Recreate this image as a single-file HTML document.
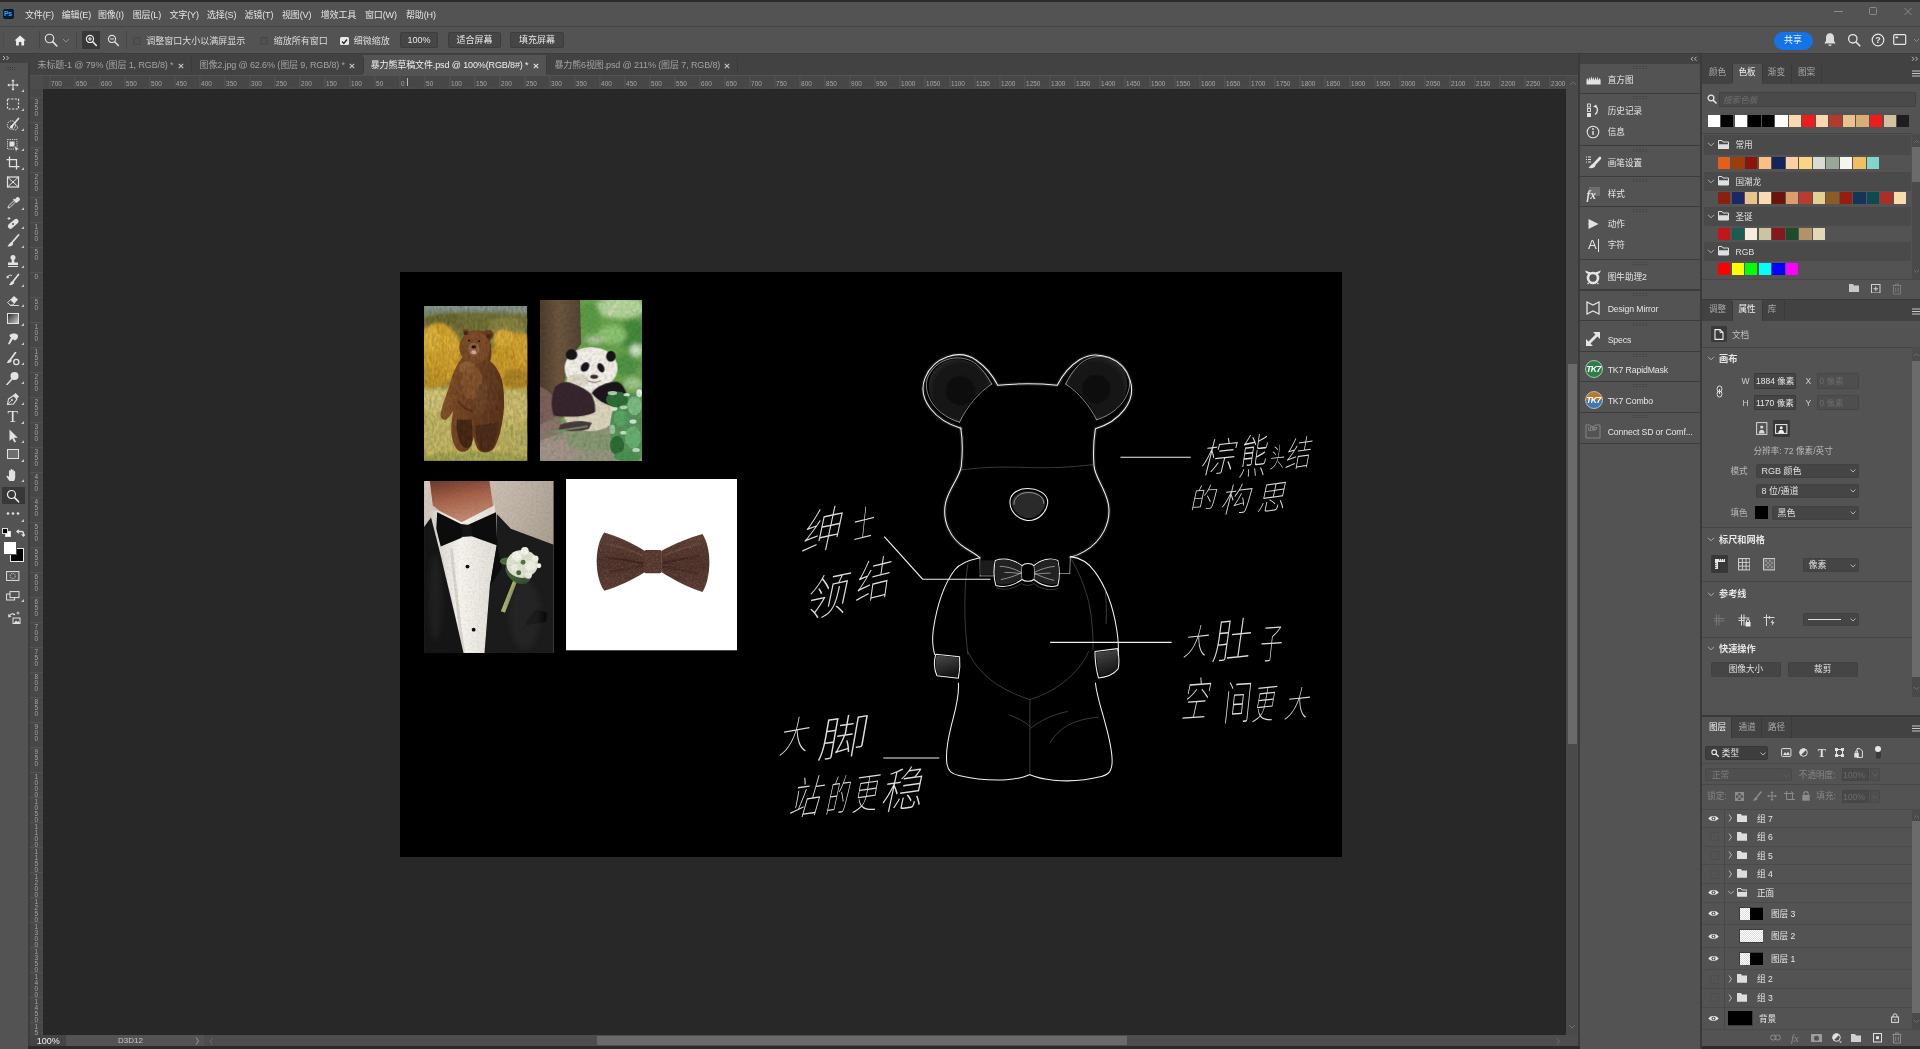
<!DOCTYPE html>
<html lang="zh-CN"><head><meta charset="utf-8"><title>Photoshop</title>
<style>
html,body{margin:0;padding:0;background:#535353;}
body{width:1920px;height:1049px;overflow:hidden;position:relative;font-family:"Liberation Sans","Noto Sans CJK SC",sans-serif;font-size:11px;color:#d6d6d6;}
div,span,svg{position:absolute;box-sizing:border-box;}
span{white-space:nowrap;}
</style></head>
<body>
<div id="app" style="left:0;top:0;width:1920px;height:1049px;overflow:hidden;will-change:transform;">
<div style="left:0px;top:0px;width:1920px;height:1049px;background:#535353;"></div>
<div style="left:0px;top:0px;width:1920px;height:2px;background:#2b2b2b;"></div>
<div style="left:0px;top:26px;width:1920px;height:1px;background:#454545;"></div>
<div style="left:3px;top:9px;width:11px;height:10px;background:#001e36;border-radius:2px;"></div>
<span style="left:4px;top:9px;height:10px;line-height:10px;font-size:7px;font-weight:bold;color:#31a8ff;letter-spacing:-0.3px;">Ps</span>
<span style="left:25px;top:6.5px;height:16px;line-height:16px;color:#e4e4e4;font-size:9px;letter-spacing:-0.150px;">文件(F)</span>
<span style="left:61.75px;top:6.5px;height:16px;line-height:16px;color:#e4e4e4;font-size:9px;letter-spacing:-0.150px;">编辑(E)</span>
<span style="left:98px;top:6.5px;height:16px;line-height:16px;color:#e4e4e4;font-size:9px;letter-spacing:-0.150px;">图像(I)</span>
<span style="left:132.75px;top:6.5px;height:16px;line-height:16px;color:#e4e4e4;font-size:9px;letter-spacing:-0.150px;">图层(L)</span>
<span style="left:169.5px;top:6.5px;height:16px;line-height:16px;color:#e4e4e4;font-size:9px;letter-spacing:-0.150px;">文字(Y)</span>
<span style="left:207px;top:6.5px;height:16px;line-height:16px;color:#e4e4e4;font-size:9px;letter-spacing:-0.150px;">选择(S)</span>
<span style="left:244.5px;top:6.5px;height:16px;line-height:16px;color:#e4e4e4;font-size:9px;letter-spacing:-0.150px;">滤镜(T)</span>
<span style="left:282px;top:6.5px;height:16px;line-height:16px;color:#e4e4e4;font-size:9px;letter-spacing:-0.150px;">视图(V)</span>
<span style="left:320.75px;top:6.5px;height:16px;line-height:16px;color:#e4e4e4;font-size:9px;letter-spacing:-0.150px;">增效工具</span>
<span style="left:365px;top:6.5px;height:16px;line-height:16px;color:#e4e4e4;font-size:9px;letter-spacing:-0.150px;">窗口(W)</span>
<span style="left:406px;top:6.5px;height:16px;line-height:16px;color:#e4e4e4;font-size:9px;letter-spacing:-0.150px;">帮助(H)</span>
<svg style="left:1832px;top:5px;" width="84" height="14" viewBox="0 0 84 14"><path d="M2 6.5h9" stroke="#8a8a8a" stroke-width="1" fill="none"/><rect x="37.5" y="2.5" width="7" height="7" rx="1" stroke="#8a8a8a" fill="none"/><path d="M72.5 3l7 7M79.5 3l-7 7" stroke="#8a8a8a" stroke-width="1" fill="none"/></svg>
<div style="left:0px;top:53px;width:1920px;height:1px;background:#3c3c3c;"></div>
<div style="left:3px;top:32px;width:1px;height:16px;background:repeating-linear-gradient(#464646 0 1px,transparent 1px 2px);"></div>
<svg style="left:13.9px;top:34.8px;" width="12.2" height="10.9" viewBox="0 0 14 13"><path d="M7 0.500L0.300 6.600h1.900v5.900h3.300V8.400h3v4.100h3.300V6.600h1.900z" fill="#ececec"/></svg>
<div style="left:38.5px;top:31px;width:1px;height:18px;background:#464646;"></div>
<svg style="left:43.7px;top:33px;" width="14.7" height="14.7" viewBox="0 0 16 16"><circle cx="6" cy="6" r="4.600" stroke="#e2e2e2" stroke-width="1.250" fill="none"/><path d="M9.400 9.400l4.600 4.800" stroke="#e2e2e2" stroke-width="1.700" stroke-linecap="round"/></svg>
<svg style="left:62px;top:38px;" width="8" height="5" viewBox="0 0 8 5"><path d="M1 1l3 3 3-3" stroke="#8d8d8d" stroke-width="1" fill="none"/></svg>
<div style="left:75.5px;top:31px;width:1px;height:18px;background:#464646;"></div>
<div style="left:82px;top:31px;width:18px;height:18px;background:#383838;"></div>
<svg style="left:84.8px;top:34.3px;" width="12.6" height="12.6" viewBox="0 0 14 14"><circle cx="5.500" cy="5.500" r="4" stroke="#ececec" stroke-width="1.250" fill="none"/><path d="M8.600 8.600l4 4.200" stroke="#ececec" stroke-width="1.700" stroke-linecap="round"/><path d="M3.300 5.500h4.400M5.500 3.300v4.400" stroke="#ececec" stroke-width="1.100"/></svg>
<svg style="left:107px;top:34.3px;" width="12.6" height="12.6" viewBox="0 0 14 14"><circle cx="5.500" cy="5.500" r="4" stroke="#dcdcdc" stroke-width="1.250" fill="none"/><path d="M8.600 8.600l4 4.200" stroke="#dcdcdc" stroke-width="1.700" stroke-linecap="round"/><path d="M3.300 5.500h4.400" stroke="#dcdcdc" stroke-width="1.100"/></svg>
<div style="left:125.5px;top:31px;width:1px;height:18px;background:#464646;"></div>
<div style="left:132.5px;top:36.5px;width:8px;height:8px;border:1px solid #464646;background:#505050;border-radius:1.5px;"></div>
<span style="left:146.2px;top:32.8px;height:16px;line-height:16px;color:#dcdcdc;font-size:9px;">调整窗口大小以满屏显示</span>
<div style="left:260px;top:36.5px;width:8px;height:8px;border:1px solid #464646;background:#505050;border-radius:1.5px;"></div>
<span style="left:273.7px;top:32.8px;height:16px;line-height:16px;color:#dcdcdc;font-size:9px;">缩放所有窗口</span>
<div style="left:340px;top:36.5px;width:8.5px;height:8.5px;background:#e8e8e8;border-radius:1.5px;"></div>
<svg style="left:340px;top:36.5px;" width="9" height="9" viewBox="0 0 9 9"><path d="M2 4.6l1.8 1.9 3.2-4" stroke="#2a2a2a" stroke-width="1.4" fill="none"/></svg>
<span style="left:353.7px;top:32.8px;height:16px;line-height:16px;color:#dcdcdc;font-size:9px;">细微缩放</span>
<div style="left:400px;top:32px;width:38px;height:16px;background:#464646;border:1px solid #3d3d3d;border-radius:2px;"></div>
<span style="left:400px;top:32px;width:38px;height:16px;line-height:17px;text-align:center;font-size:9px;color:#e6e6e6;">100%</span>
<div style="left:447.7px;top:32px;width:53.5px;height:16px;background:#464646;border:1px solid #3d3d3d;border-radius:2px;"></div>
<span style="left:447.7px;top:32px;width:53.5px;height:16px;line-height:17px;text-align:center;font-size:9px;color:#e6e6e6;">适合屏幕</span>
<div style="left:510px;top:32px;width:54px;height:16px;background:#464646;border:1px solid #3d3d3d;border-radius:2px;"></div>
<span style="left:510px;top:32px;width:54px;height:16px;line-height:17px;text-align:center;font-size:9px;color:#e6e6e6;">填充屏幕</span>
<div style="left:1773.5px;top:32px;width:39px;height:17.5px;background:#1473e6;border-radius:9px;"></div>
<span style="left:1773.5px;top:32px;width:39px;height:17.5px;line-height:17px;text-align:center;font-size:9px;color:#fff;">共享</span>
<svg style="left:1823px;top:32px;" width="14" height="16" viewBox="0 0 14 16"><path d="M7 1.2c-2.6 0-4 2-4 4.4v3.2L1.4 11.4h11.2L11 8.8V5.6C11 3.2 9.600 1.2 7 1.200z" fill="#dcdcdc"/><path d="M5.400 12.400a1.600 1.600 0 0 0 3.200 0z" fill="#dcdcdc"/></svg>
<svg style="left:1847px;top:33px;" width="14" height="14" viewBox="0 0 14 14"><circle cx="5.800" cy="5.800" r="4.200" stroke="#e6e6e6" stroke-width="1.300" fill="none"/><path d="M9 9l3.800 3.800" stroke="#e6e6e6" stroke-width="1.600" stroke-linecap="round"/></svg>
<svg style="left:1871px;top:33px;" width="14" height="14" viewBox="0 0 14 14"><circle cx="7" cy="7" r="5.800" stroke="#e6e6e6" stroke-width="1.200" fill="none"/></svg>
<span style="left:1871px;top:33px;width:14px;height:14px;line-height:14px;text-align:center;font-size:9px;font-weight:bold;color:#e6e6e6;">?</span>
<svg style="left:1893px;top:34px;" width="14" height="12" viewBox="0 0 14 12"><rect x="0.700" y="0.700" width="12" height="9.600" rx="1" stroke="#e6e6e6" stroke-width="1.200" fill="none"/><rect x="2.500" y="2.600" width="2.600" height="1.600" fill="#e6e6e6"/></svg>
<svg style="left:1913px;top:38px;" width="7" height="5" viewBox="0 0 7 5"><path d="M1 1l2.500 2.500L6 1" stroke="#8d8d8d" stroke-width="1" fill="none"/></svg>
<div style="left:0px;top:54px;width:1920px;height:21px;background:#424242;"></div>
<div style="left:0px;top:54px;width:29px;height:9px;background:#424242;"></div>
<svg style="left:2px;top:55px;" width="8" height="6" viewBox="0 0 8 6"><path d="M1 1l2 2-2 2M4.500 1l2 2-2 2" stroke="#c8c8c8" stroke-width="0.900" fill="none"/></svg>
<div style="left:363px;top:55px;width:183px;height:20px;background:#535353;"></div>
<span style="left:37.5px;top:57.0px;height:16px;line-height:16px;color:#a2a2a2;font-size:9px;letter-spacing:-0.120px;">未标题-1 @ 79% (图层 1, RGB/8) *</span>
<svg style="left:178.2px;top:62.5px;" width="6" height="6" viewBox="0 0 6 6"><path d="M0.800 0.800l4.400 4.400M5.200 0.800l-4.400 4.400" stroke="#c0c0c0" stroke-width="1.200"/></svg>
<span style="left:199.5px;top:57.0px;height:16px;line-height:16px;color:#a2a2a2;font-size:9px;letter-spacing:-0.120px;">图像2.jpg @ 62.6% (图层 9, RGB/8) *</span>
<svg style="left:349px;top:62.5px;" width="6" height="6" viewBox="0 0 6 6"><path d="M0.800 0.800l4.400 4.400M5.200 0.800l-4.400 4.400" stroke="#c0c0c0" stroke-width="1.200"/></svg>
<span style="left:370.7px;top:57.0px;height:16px;line-height:16px;color:#f0f0f0;font-size:9px;letter-spacing:-0.120px;">暴力熊草稿文件.psd @ 100%(RGB/8#) *</span>
<svg style="left:532.7px;top:62.5px;" width="6" height="6" viewBox="0 0 6 6"><path d="M0.800 0.800l4.400 4.400M5.200 0.800l-4.400 4.400" stroke="#e0e0e0" stroke-width="1.200"/></svg>
<span style="left:554.4px;top:57.0px;height:16px;line-height:16px;color:#a2a2a2;font-size:9px;letter-spacing:-0.120px;">暴力熊6视图.psd @ 211% (图层 7, RGB/8)</span>
<svg style="left:724px;top:62.5px;" width="6" height="6" viewBox="0 0 6 6"><path d="M0.800 0.800l4.400 4.400M5.200 0.800l-4.400 4.400" stroke="#c0c0c0" stroke-width="1.200"/></svg>
<div style="left:191px;top:57px;width:1px;height:16px;background:#3b3b3b;"></div>
<div style="left:362.5px;top:57px;width:1px;height:16px;background:#3b3b3b;"></div>
<div style="left:546px;top:57px;width:1px;height:16px;background:#3b3b3b;"></div>
<div style="left:737px;top:57px;width:1px;height:16px;background:#3b3b3b;"></div>
<div style="left:28px;top:63px;width:2px;height:986px;background:#3d3d3d;"></div>
<div style="left:30px;top:76px;width:1536px;height:959px;background:#282828;"></div>
<div style="left:30px;top:76px;width:1536px;height:12.5px;background:#474747;"></div>
<div style="left:30px;top:76px;width:12.5px;height:12.5px;background:#4c4c4c;"></div>
<svg style="left:30px;top:76px;font-family:'Liberation Sans',sans-serif;" width="1536" height="12.5" viewBox="0 0 1536 12.5"><rect x="19.4" y="0" width="1" height="12.500" fill="#565656"/><text transform="translate(21.1 9.500) scale(0.880 1)" font-size="7.300" fill="#a6a6a6">700</text><rect x="44.4" y="0" width="1" height="12.500" fill="#565656"/><text transform="translate(46.1 9.500) scale(0.880 1)" font-size="7.300" fill="#a6a6a6">650</text><rect x="69.4" y="0" width="1" height="12.500" fill="#565656"/><text transform="translate(71.1 9.500) scale(0.880 1)" font-size="7.300" fill="#a6a6a6">600</text><rect x="94.4" y="0" width="1" height="12.500" fill="#565656"/><text transform="translate(96.1 9.500) scale(0.880 1)" font-size="7.300" fill="#a6a6a6">550</text><rect x="119.4" y="0" width="1" height="12.500" fill="#565656"/><text transform="translate(121.1 9.500) scale(0.880 1)" font-size="7.300" fill="#a6a6a6">500</text><rect x="144.4" y="0" width="1" height="12.500" fill="#565656"/><text transform="translate(146.1 9.500) scale(0.880 1)" font-size="7.300" fill="#a6a6a6">450</text><rect x="169.4" y="0" width="1" height="12.500" fill="#565656"/><text transform="translate(171.1 9.500) scale(0.880 1)" font-size="7.300" fill="#a6a6a6">400</text><rect x="194.4" y="0" width="1" height="12.500" fill="#565656"/><text transform="translate(196.1 9.500) scale(0.880 1)" font-size="7.300" fill="#a6a6a6">350</text><rect x="219.4" y="0" width="1" height="12.500" fill="#565656"/><text transform="translate(221.1 9.500) scale(0.880 1)" font-size="7.300" fill="#a6a6a6">300</text><rect x="244.4" y="0" width="1" height="12.500" fill="#565656"/><text transform="translate(246.1 9.500) scale(0.880 1)" font-size="7.300" fill="#a6a6a6">250</text><rect x="269.4" y="0" width="1" height="12.500" fill="#565656"/><text transform="translate(271.1 9.500) scale(0.880 1)" font-size="7.300" fill="#a6a6a6">200</text><rect x="294.4" y="0" width="1" height="12.500" fill="#565656"/><text transform="translate(296.1 9.500) scale(0.880 1)" font-size="7.300" fill="#a6a6a6">150</text><rect x="319.4" y="0" width="1" height="12.500" fill="#565656"/><text transform="translate(321.1 9.500) scale(0.880 1)" font-size="7.300" fill="#a6a6a6">100</text><rect x="344.4" y="0" width="1" height="12.500" fill="#565656"/><text transform="translate(346.1 9.500) scale(0.880 1)" font-size="7.300" fill="#a6a6a6">50</text><rect x="369.4" y="0" width="1" height="12.500" fill="#565656"/><text transform="translate(371.1 9.500) scale(0.880 1)" font-size="7.300" fill="#a6a6a6">0</text><rect x="394.4" y="0" width="1" height="12.500" fill="#565656"/><text transform="translate(396.1 9.500) scale(0.880 1)" font-size="7.300" fill="#a6a6a6">50</text><rect x="419.4" y="0" width="1" height="12.500" fill="#565656"/><text transform="translate(421.1 9.500) scale(0.880 1)" font-size="7.300" fill="#a6a6a6">100</text><rect x="444.4" y="0" width="1" height="12.500" fill="#565656"/><text transform="translate(446.1 9.500) scale(0.880 1)" font-size="7.300" fill="#a6a6a6">150</text><rect x="469.4" y="0" width="1" height="12.500" fill="#565656"/><text transform="translate(471.1 9.500) scale(0.880 1)" font-size="7.300" fill="#a6a6a6">200</text><rect x="494.4" y="0" width="1" height="12.500" fill="#565656"/><text transform="translate(496.1 9.500) scale(0.880 1)" font-size="7.300" fill="#a6a6a6">250</text><rect x="519.4" y="0" width="1" height="12.500" fill="#565656"/><text transform="translate(521.1 9.500) scale(0.880 1)" font-size="7.300" fill="#a6a6a6">300</text><rect x="544.4" y="0" width="1" height="12.500" fill="#565656"/><text transform="translate(546.1 9.500) scale(0.880 1)" font-size="7.300" fill="#a6a6a6">350</text><rect x="569.4" y="0" width="1" height="12.500" fill="#565656"/><text transform="translate(571.1 9.500) scale(0.880 1)" font-size="7.300" fill="#a6a6a6">400</text><rect x="594.4" y="0" width="1" height="12.500" fill="#565656"/><text transform="translate(596.1 9.500) scale(0.880 1)" font-size="7.300" fill="#a6a6a6">450</text><rect x="619.4" y="0" width="1" height="12.500" fill="#565656"/><text transform="translate(621.1 9.500) scale(0.880 1)" font-size="7.300" fill="#a6a6a6">500</text><rect x="644.4" y="0" width="1" height="12.500" fill="#565656"/><text transform="translate(646.1 9.500) scale(0.880 1)" font-size="7.300" fill="#a6a6a6">550</text><rect x="669.4" y="0" width="1" height="12.500" fill="#565656"/><text transform="translate(671.1 9.500) scale(0.880 1)" font-size="7.300" fill="#a6a6a6">600</text><rect x="694.4" y="0" width="1" height="12.500" fill="#565656"/><text transform="translate(696.1 9.500) scale(0.880 1)" font-size="7.300" fill="#a6a6a6">650</text><rect x="719.4" y="0" width="1" height="12.500" fill="#565656"/><text transform="translate(721.1 9.500) scale(0.880 1)" font-size="7.300" fill="#a6a6a6">700</text><rect x="744.4" y="0" width="1" height="12.500" fill="#565656"/><text transform="translate(746.1 9.500) scale(0.880 1)" font-size="7.300" fill="#a6a6a6">750</text><rect x="769.4" y="0" width="1" height="12.500" fill="#565656"/><text transform="translate(771.1 9.500) scale(0.880 1)" font-size="7.300" fill="#a6a6a6">800</text><rect x="794.4" y="0" width="1" height="12.500" fill="#565656"/><text transform="translate(796.1 9.500) scale(0.880 1)" font-size="7.300" fill="#a6a6a6">850</text><rect x="819.4" y="0" width="1" height="12.500" fill="#565656"/><text transform="translate(821.1 9.500) scale(0.880 1)" font-size="7.300" fill="#a6a6a6">900</text><rect x="844.4" y="0" width="1" height="12.500" fill="#565656"/><text transform="translate(846.1 9.500) scale(0.880 1)" font-size="7.300" fill="#a6a6a6">950</text><rect x="869.4" y="0" width="1" height="12.500" fill="#565656"/><text transform="translate(871.1 9.500) scale(0.880 1)" font-size="7.300" fill="#a6a6a6">1000</text><rect x="894.4" y="0" width="1" height="12.500" fill="#565656"/><text transform="translate(896.1 9.500) scale(0.880 1)" font-size="7.300" fill="#a6a6a6">1050</text><rect x="919.4" y="0" width="1" height="12.500" fill="#565656"/><text transform="translate(921.1 9.500) scale(0.880 1)" font-size="7.300" fill="#a6a6a6">1100</text><rect x="944.4" y="0" width="1" height="12.500" fill="#565656"/><text transform="translate(946.1 9.500) scale(0.880 1)" font-size="7.300" fill="#a6a6a6">1150</text><rect x="969.4" y="0" width="1" height="12.500" fill="#565656"/><text transform="translate(971.1 9.500) scale(0.880 1)" font-size="7.300" fill="#a6a6a6">1200</text><rect x="994.4" y="0" width="1" height="12.500" fill="#565656"/><text transform="translate(996.1 9.500) scale(0.880 1)" font-size="7.300" fill="#a6a6a6">1250</text><rect x="1019.4" y="0" width="1" height="12.500" fill="#565656"/><text transform="translate(1021.1 9.500) scale(0.880 1)" font-size="7.300" fill="#a6a6a6">1300</text><rect x="1044.4" y="0" width="1" height="12.500" fill="#565656"/><text transform="translate(1046.1 9.500) scale(0.880 1)" font-size="7.300" fill="#a6a6a6">1350</text><rect x="1069.4" y="0" width="1" height="12.500" fill="#565656"/><text transform="translate(1071.1 9.500) scale(0.880 1)" font-size="7.300" fill="#a6a6a6">1400</text><rect x="1094.4" y="0" width="1" height="12.500" fill="#565656"/><text transform="translate(1096.1 9.500) scale(0.880 1)" font-size="7.300" fill="#a6a6a6">1450</text><rect x="1119.4" y="0" width="1" height="12.500" fill="#565656"/><text transform="translate(1121.1 9.500) scale(0.880 1)" font-size="7.300" fill="#a6a6a6">1500</text><rect x="1144.4" y="0" width="1" height="12.500" fill="#565656"/><text transform="translate(1146.1 9.500) scale(0.880 1)" font-size="7.300" fill="#a6a6a6">1550</text><rect x="1169.4" y="0" width="1" height="12.500" fill="#565656"/><text transform="translate(1171.1 9.500) scale(0.880 1)" font-size="7.300" fill="#a6a6a6">1600</text><rect x="1194.4" y="0" width="1" height="12.500" fill="#565656"/><text transform="translate(1196.1 9.500) scale(0.880 1)" font-size="7.300" fill="#a6a6a6">1650</text><rect x="1219.4" y="0" width="1" height="12.500" fill="#565656"/><text transform="translate(1221.1 9.500) scale(0.880 1)" font-size="7.300" fill="#a6a6a6">1700</text><rect x="1244.4" y="0" width="1" height="12.500" fill="#565656"/><text transform="translate(1246.1 9.500) scale(0.880 1)" font-size="7.300" fill="#a6a6a6">1750</text><rect x="1269.4" y="0" width="1" height="12.500" fill="#565656"/><text transform="translate(1271.1 9.500) scale(0.880 1)" font-size="7.300" fill="#a6a6a6">1800</text><rect x="1294.4" y="0" width="1" height="12.500" fill="#565656"/><text transform="translate(1296.1 9.500) scale(0.880 1)" font-size="7.300" fill="#a6a6a6">1850</text><rect x="1319.4" y="0" width="1" height="12.500" fill="#565656"/><text transform="translate(1321.1 9.500) scale(0.880 1)" font-size="7.300" fill="#a6a6a6">1900</text><rect x="1344.4" y="0" width="1" height="12.500" fill="#565656"/><text transform="translate(1346.1 9.500) scale(0.880 1)" font-size="7.300" fill="#a6a6a6">1950</text><rect x="1369.4" y="0" width="1" height="12.500" fill="#565656"/><text transform="translate(1371.1 9.500) scale(0.880 1)" font-size="7.300" fill="#a6a6a6">2000</text><rect x="1394.4" y="0" width="1" height="12.500" fill="#565656"/><text transform="translate(1396.1 9.500) scale(0.880 1)" font-size="7.300" fill="#a6a6a6">2050</text><rect x="1419.4" y="0" width="1" height="12.500" fill="#565656"/><text transform="translate(1421.1 9.500) scale(0.880 1)" font-size="7.300" fill="#a6a6a6">2100</text><rect x="1444.4" y="0" width="1" height="12.500" fill="#565656"/><text transform="translate(1446.1 9.500) scale(0.880 1)" font-size="7.300" fill="#a6a6a6">2150</text><rect x="1469.4" y="0" width="1" height="12.500" fill="#565656"/><text transform="translate(1471.1 9.500) scale(0.880 1)" font-size="7.300" fill="#a6a6a6">2200</text><rect x="1494.4" y="0" width="1" height="12.500" fill="#565656"/><text transform="translate(1496.1 9.500) scale(0.880 1)" font-size="7.300" fill="#a6a6a6">2250</text><rect x="1519.4" y="0" width="1" height="12.500" fill="#565656"/><text transform="translate(1521.1 9.500) scale(0.880 1)" font-size="7.300" fill="#a6a6a6">2300</text><rect x="14.399999999999999" y="11.300" width="1" height="1.200" fill="#5a5a5a"/><rect x="24.4" y="11.300" width="1" height="1.200" fill="#5a5a5a"/><rect x="29.4" y="11.300" width="1" height="1.200" fill="#5a5a5a"/><rect x="34.4" y="11.300" width="1" height="1.200" fill="#5a5a5a"/><rect x="39.4" y="11.300" width="1" height="1.200" fill="#5a5a5a"/><rect x="49.4" y="11.300" width="1" height="1.200" fill="#5a5a5a"/><rect x="54.4" y="11.300" width="1" height="1.200" fill="#5a5a5a"/><rect x="59.4" y="11.300" width="1" height="1.200" fill="#5a5a5a"/><rect x="64.4" y="11.300" width="1" height="1.200" fill="#5a5a5a"/><rect x="74.4" y="11.300" width="1" height="1.200" fill="#5a5a5a"/><rect x="79.4" y="11.300" width="1" height="1.200" fill="#5a5a5a"/><rect x="84.4" y="11.300" width="1" height="1.200" fill="#5a5a5a"/><rect x="89.4" y="11.300" width="1" height="1.200" fill="#5a5a5a"/><rect x="99.4" y="11.300" width="1" height="1.200" fill="#5a5a5a"/><rect x="104.4" y="11.300" width="1" height="1.200" fill="#5a5a5a"/><rect x="109.4" y="11.300" width="1" height="1.200" fill="#5a5a5a"/><rect x="114.4" y="11.300" width="1" height="1.200" fill="#5a5a5a"/><rect x="124.4" y="11.300" width="1" height="1.200" fill="#5a5a5a"/><rect x="129.4" y="11.300" width="1" height="1.200" fill="#5a5a5a"/><rect x="134.4" y="11.300" width="1" height="1.200" fill="#5a5a5a"/><rect x="139.4" y="11.300" width="1" height="1.200" fill="#5a5a5a"/><rect x="149.4" y="11.300" width="1" height="1.200" fill="#5a5a5a"/><rect x="154.4" y="11.300" width="1" height="1.200" fill="#5a5a5a"/><rect x="159.4" y="11.300" width="1" height="1.200" fill="#5a5a5a"/><rect x="164.4" y="11.300" width="1" height="1.200" fill="#5a5a5a"/><rect x="174.4" y="11.300" width="1" height="1.200" fill="#5a5a5a"/><rect x="179.4" y="11.300" width="1" height="1.200" fill="#5a5a5a"/><rect x="184.4" y="11.300" width="1" height="1.200" fill="#5a5a5a"/><rect x="189.4" y="11.300" width="1" height="1.200" fill="#5a5a5a"/><rect x="199.4" y="11.300" width="1" height="1.200" fill="#5a5a5a"/><rect x="204.4" y="11.300" width="1" height="1.200" fill="#5a5a5a"/><rect x="209.4" y="11.300" width="1" height="1.200" fill="#5a5a5a"/><rect x="214.4" y="11.300" width="1" height="1.200" fill="#5a5a5a"/><rect x="224.4" y="11.300" width="1" height="1.200" fill="#5a5a5a"/><rect x="229.4" y="11.300" width="1" height="1.200" fill="#5a5a5a"/><rect x="234.4" y="11.300" width="1" height="1.200" fill="#5a5a5a"/><rect x="239.4" y="11.300" width="1" height="1.200" fill="#5a5a5a"/><rect x="249.4" y="11.300" width="1" height="1.200" fill="#5a5a5a"/><rect x="254.4" y="11.300" width="1" height="1.200" fill="#5a5a5a"/><rect x="259.4" y="11.300" width="1" height="1.200" fill="#5a5a5a"/><rect x="264.4" y="11.300" width="1" height="1.200" fill="#5a5a5a"/><rect x="274.4" y="11.300" width="1" height="1.200" fill="#5a5a5a"/><rect x="279.4" y="11.300" width="1" height="1.200" fill="#5a5a5a"/><rect x="284.4" y="11.300" width="1" height="1.200" fill="#5a5a5a"/><rect x="289.4" y="11.300" width="1" height="1.200" fill="#5a5a5a"/><rect x="299.4" y="11.300" width="1" height="1.200" fill="#5a5a5a"/><rect x="304.4" y="11.300" width="1" height="1.200" fill="#5a5a5a"/><rect x="309.4" y="11.300" width="1" height="1.200" fill="#5a5a5a"/><rect x="314.4" y="11.300" width="1" height="1.200" fill="#5a5a5a"/><rect x="324.4" y="11.300" width="1" height="1.200" fill="#5a5a5a"/><rect x="329.4" y="11.300" width="1" height="1.200" fill="#5a5a5a"/><rect x="334.4" y="11.300" width="1" height="1.200" fill="#5a5a5a"/><rect x="339.4" y="11.300" width="1" height="1.200" fill="#5a5a5a"/><rect x="349.4" y="11.300" width="1" height="1.200" fill="#5a5a5a"/><rect x="354.4" y="11.300" width="1" height="1.200" fill="#5a5a5a"/><rect x="359.4" y="11.300" width="1" height="1.200" fill="#5a5a5a"/><rect x="364.4" y="11.300" width="1" height="1.200" fill="#5a5a5a"/><rect x="374.4" y="11.300" width="1" height="1.200" fill="#5a5a5a"/><rect x="379.4" y="11.300" width="1" height="1.200" fill="#5a5a5a"/><rect x="384.4" y="11.300" width="1" height="1.200" fill="#5a5a5a"/><rect x="389.4" y="11.300" width="1" height="1.200" fill="#5a5a5a"/><rect x="399.4" y="11.300" width="1" height="1.200" fill="#5a5a5a"/><rect x="404.4" y="11.300" width="1" height="1.200" fill="#5a5a5a"/><rect x="409.4" y="11.300" width="1" height="1.200" fill="#5a5a5a"/><rect x="414.4" y="11.300" width="1" height="1.200" fill="#5a5a5a"/><rect x="424.4" y="11.300" width="1" height="1.200" fill="#5a5a5a"/><rect x="429.4" y="11.300" width="1" height="1.200" fill="#5a5a5a"/><rect x="434.4" y="11.300" width="1" height="1.200" fill="#5a5a5a"/><rect x="439.4" y="11.300" width="1" height="1.200" fill="#5a5a5a"/><rect x="449.4" y="11.300" width="1" height="1.200" fill="#5a5a5a"/><rect x="454.4" y="11.300" width="1" height="1.200" fill="#5a5a5a"/><rect x="459.4" y="11.300" width="1" height="1.200" fill="#5a5a5a"/><rect x="464.4" y="11.300" width="1" height="1.200" fill="#5a5a5a"/><rect x="474.4" y="11.300" width="1" height="1.200" fill="#5a5a5a"/><rect x="479.4" y="11.300" width="1" height="1.200" fill="#5a5a5a"/><rect x="484.4" y="11.300" width="1" height="1.200" fill="#5a5a5a"/><rect x="489.4" y="11.300" width="1" height="1.200" fill="#5a5a5a"/><rect x="499.4" y="11.300" width="1" height="1.200" fill="#5a5a5a"/><rect x="504.4" y="11.300" width="1" height="1.200" fill="#5a5a5a"/><rect x="509.4" y="11.300" width="1" height="1.200" fill="#5a5a5a"/><rect x="514.4" y="11.300" width="1" height="1.200" fill="#5a5a5a"/><rect x="524.4" y="11.300" width="1" height="1.200" fill="#5a5a5a"/><rect x="529.4" y="11.300" width="1" height="1.200" fill="#5a5a5a"/><rect x="534.4" y="11.300" width="1" height="1.200" fill="#5a5a5a"/><rect x="539.4" y="11.300" width="1" height="1.200" fill="#5a5a5a"/><rect x="549.4" y="11.300" width="1" height="1.200" fill="#5a5a5a"/><rect x="554.4" y="11.300" width="1" height="1.200" fill="#5a5a5a"/><rect x="559.4" y="11.300" width="1" height="1.200" fill="#5a5a5a"/><rect x="564.4" y="11.300" width="1" height="1.200" fill="#5a5a5a"/><rect x="574.4" y="11.300" width="1" height="1.200" fill="#5a5a5a"/><rect x="579.4" y="11.300" width="1" height="1.200" fill="#5a5a5a"/><rect x="584.4" y="11.300" width="1" height="1.200" fill="#5a5a5a"/><rect x="589.4" y="11.300" width="1" height="1.200" fill="#5a5a5a"/><rect x="599.4" y="11.300" width="1" height="1.200" fill="#5a5a5a"/><rect x="604.4" y="11.300" width="1" height="1.200" fill="#5a5a5a"/><rect x="609.4" y="11.300" width="1" height="1.200" fill="#5a5a5a"/><rect x="614.4" y="11.300" width="1" height="1.200" fill="#5a5a5a"/><rect x="624.4" y="11.300" width="1" height="1.200" fill="#5a5a5a"/><rect x="629.4" y="11.300" width="1" height="1.200" fill="#5a5a5a"/><rect x="634.4" y="11.300" width="1" height="1.200" fill="#5a5a5a"/><rect x="639.4" y="11.300" width="1" height="1.200" fill="#5a5a5a"/><rect x="649.4" y="11.300" width="1" height="1.200" fill="#5a5a5a"/><rect x="654.4" y="11.300" width="1" height="1.200" fill="#5a5a5a"/><rect x="659.4" y="11.300" width="1" height="1.200" fill="#5a5a5a"/><rect x="664.4" y="11.300" width="1" height="1.200" fill="#5a5a5a"/><rect x="674.4" y="11.300" width="1" height="1.200" fill="#5a5a5a"/><rect x="679.4" y="11.300" width="1" height="1.200" fill="#5a5a5a"/><rect x="684.4" y="11.300" width="1" height="1.200" fill="#5a5a5a"/><rect x="689.4" y="11.300" width="1" height="1.200" fill="#5a5a5a"/><rect x="699.4" y="11.300" width="1" height="1.200" fill="#5a5a5a"/><rect x="704.4" y="11.300" width="1" height="1.200" fill="#5a5a5a"/><rect x="709.4" y="11.300" width="1" height="1.200" fill="#5a5a5a"/><rect x="714.4" y="11.300" width="1" height="1.200" fill="#5a5a5a"/><rect x="724.4" y="11.300" width="1" height="1.200" fill="#5a5a5a"/><rect x="729.4" y="11.300" width="1" height="1.200" fill="#5a5a5a"/><rect x="734.4" y="11.300" width="1" height="1.200" fill="#5a5a5a"/><rect x="739.4" y="11.300" width="1" height="1.200" fill="#5a5a5a"/><rect x="749.4" y="11.300" width="1" height="1.200" fill="#5a5a5a"/><rect x="754.4" y="11.300" width="1" height="1.200" fill="#5a5a5a"/><rect x="759.4" y="11.300" width="1" height="1.200" fill="#5a5a5a"/><rect x="764.4" y="11.300" width="1" height="1.200" fill="#5a5a5a"/><rect x="774.4" y="11.300" width="1" height="1.200" fill="#5a5a5a"/><rect x="779.4" y="11.300" width="1" height="1.200" fill="#5a5a5a"/><rect x="784.4" y="11.300" width="1" height="1.200" fill="#5a5a5a"/><rect x="789.4" y="11.300" width="1" height="1.200" fill="#5a5a5a"/><rect x="799.4" y="11.300" width="1" height="1.200" fill="#5a5a5a"/><rect x="804.4" y="11.300" width="1" height="1.200" fill="#5a5a5a"/><rect x="809.4" y="11.300" width="1" height="1.200" fill="#5a5a5a"/><rect x="814.4" y="11.300" width="1" height="1.200" fill="#5a5a5a"/><rect x="824.4" y="11.300" width="1" height="1.200" fill="#5a5a5a"/><rect x="829.4" y="11.300" width="1" height="1.200" fill="#5a5a5a"/><rect x="834.4" y="11.300" width="1" height="1.200" fill="#5a5a5a"/><rect x="839.4" y="11.300" width="1" height="1.200" fill="#5a5a5a"/><rect x="849.4" y="11.300" width="1" height="1.200" fill="#5a5a5a"/><rect x="854.4" y="11.300" width="1" height="1.200" fill="#5a5a5a"/><rect x="859.4" y="11.300" width="1" height="1.200" fill="#5a5a5a"/><rect x="864.4" y="11.300" width="1" height="1.200" fill="#5a5a5a"/><rect x="874.4" y="11.300" width="1" height="1.200" fill="#5a5a5a"/><rect x="879.4" y="11.300" width="1" height="1.200" fill="#5a5a5a"/><rect x="884.4" y="11.300" width="1" height="1.200" fill="#5a5a5a"/><rect x="889.4" y="11.300" width="1" height="1.200" fill="#5a5a5a"/><rect x="899.4" y="11.300" width="1" height="1.200" fill="#5a5a5a"/><rect x="904.4" y="11.300" width="1" height="1.200" fill="#5a5a5a"/><rect x="909.4" y="11.300" width="1" height="1.200" fill="#5a5a5a"/><rect x="914.4" y="11.300" width="1" height="1.200" fill="#5a5a5a"/><rect x="924.4" y="11.300" width="1" height="1.200" fill="#5a5a5a"/><rect x="929.4" y="11.300" width="1" height="1.200" fill="#5a5a5a"/><rect x="934.4" y="11.300" width="1" height="1.200" fill="#5a5a5a"/><rect x="939.4" y="11.300" width="1" height="1.200" fill="#5a5a5a"/><rect x="949.4" y="11.300" width="1" height="1.200" fill="#5a5a5a"/><rect x="954.4" y="11.300" width="1" height="1.200" fill="#5a5a5a"/><rect x="959.4" y="11.300" width="1" height="1.200" fill="#5a5a5a"/><rect x="964.4" y="11.300" width="1" height="1.200" fill="#5a5a5a"/><rect x="974.4" y="11.300" width="1" height="1.200" fill="#5a5a5a"/><rect x="979.4" y="11.300" width="1" height="1.200" fill="#5a5a5a"/><rect x="984.4" y="11.300" width="1" height="1.200" fill="#5a5a5a"/><rect x="989.4" y="11.300" width="1" height="1.200" fill="#5a5a5a"/><rect x="999.4" y="11.300" width="1" height="1.200" fill="#5a5a5a"/><rect x="1004.4" y="11.300" width="1" height="1.200" fill="#5a5a5a"/><rect x="1009.4" y="11.300" width="1" height="1.200" fill="#5a5a5a"/><rect x="1014.4" y="11.300" width="1" height="1.200" fill="#5a5a5a"/><rect x="1024.4" y="11.300" width="1" height="1.200" fill="#5a5a5a"/><rect x="1029.4" y="11.300" width="1" height="1.200" fill="#5a5a5a"/><rect x="1034.4" y="11.300" width="1" height="1.200" fill="#5a5a5a"/><rect x="1039.4" y="11.300" width="1" height="1.200" fill="#5a5a5a"/><rect x="1049.4" y="11.300" width="1" height="1.200" fill="#5a5a5a"/><rect x="1054.4" y="11.300" width="1" height="1.200" fill="#5a5a5a"/><rect x="1059.4" y="11.300" width="1" height="1.200" fill="#5a5a5a"/><rect x="1064.4" y="11.300" width="1" height="1.200" fill="#5a5a5a"/><rect x="1074.4" y="11.300" width="1" height="1.200" fill="#5a5a5a"/><rect x="1079.4" y="11.300" width="1" height="1.200" fill="#5a5a5a"/><rect x="1084.4" y="11.300" width="1" height="1.200" fill="#5a5a5a"/><rect x="1089.4" y="11.300" width="1" height="1.200" fill="#5a5a5a"/><rect x="1099.4" y="11.300" width="1" height="1.200" fill="#5a5a5a"/><rect x="1104.4" y="11.300" width="1" height="1.200" fill="#5a5a5a"/><rect x="1109.4" y="11.300" width="1" height="1.200" fill="#5a5a5a"/><rect x="1114.4" y="11.300" width="1" height="1.200" fill="#5a5a5a"/><rect x="1124.4" y="11.300" width="1" height="1.200" fill="#5a5a5a"/><rect x="1129.4" y="11.300" width="1" height="1.200" fill="#5a5a5a"/><rect x="1134.4" y="11.300" width="1" height="1.200" fill="#5a5a5a"/><rect x="1139.4" y="11.300" width="1" height="1.200" fill="#5a5a5a"/><rect x="1149.4" y="11.300" width="1" height="1.200" fill="#5a5a5a"/><rect x="1154.4" y="11.300" width="1" height="1.200" fill="#5a5a5a"/><rect x="1159.4" y="11.300" width="1" height="1.200" fill="#5a5a5a"/><rect x="1164.4" y="11.300" width="1" height="1.200" fill="#5a5a5a"/><rect x="1174.4" y="11.300" width="1" height="1.200" fill="#5a5a5a"/><rect x="1179.4" y="11.300" width="1" height="1.200" fill="#5a5a5a"/><rect x="1184.4" y="11.300" width="1" height="1.200" fill="#5a5a5a"/><rect x="1189.4" y="11.300" width="1" height="1.200" fill="#5a5a5a"/><rect x="1199.4" y="11.300" width="1" height="1.200" fill="#5a5a5a"/><rect x="1204.4" y="11.300" width="1" height="1.200" fill="#5a5a5a"/><rect x="1209.4" y="11.300" width="1" height="1.200" fill="#5a5a5a"/><rect x="1214.4" y="11.300" width="1" height="1.200" fill="#5a5a5a"/><rect x="1224.4" y="11.300" width="1" height="1.200" fill="#5a5a5a"/><rect x="1229.4" y="11.300" width="1" height="1.200" fill="#5a5a5a"/><rect x="1234.4" y="11.300" width="1" height="1.200" fill="#5a5a5a"/><rect x="1239.4" y="11.300" width="1" height="1.200" fill="#5a5a5a"/><rect x="1249.4" y="11.300" width="1" height="1.200" fill="#5a5a5a"/><rect x="1254.4" y="11.300" width="1" height="1.200" fill="#5a5a5a"/><rect x="1259.4" y="11.300" width="1" height="1.200" fill="#5a5a5a"/><rect x="1264.4" y="11.300" width="1" height="1.200" fill="#5a5a5a"/><rect x="1274.4" y="11.300" width="1" height="1.200" fill="#5a5a5a"/><rect x="1279.4" y="11.300" width="1" height="1.200" fill="#5a5a5a"/><rect x="1284.4" y="11.300" width="1" height="1.200" fill="#5a5a5a"/><rect x="1289.4" y="11.300" width="1" height="1.200" fill="#5a5a5a"/><rect x="1299.4" y="11.300" width="1" height="1.200" fill="#5a5a5a"/><rect x="1304.4" y="11.300" width="1" height="1.200" fill="#5a5a5a"/><rect x="1309.4" y="11.300" width="1" height="1.200" fill="#5a5a5a"/><rect x="1314.4" y="11.300" width="1" height="1.200" fill="#5a5a5a"/><rect x="1324.4" y="11.300" width="1" height="1.200" fill="#5a5a5a"/><rect x="1329.4" y="11.300" width="1" height="1.200" fill="#5a5a5a"/><rect x="1334.4" y="11.300" width="1" height="1.200" fill="#5a5a5a"/><rect x="1339.4" y="11.300" width="1" height="1.200" fill="#5a5a5a"/><rect x="1349.4" y="11.300" width="1" height="1.200" fill="#5a5a5a"/><rect x="1354.4" y="11.300" width="1" height="1.200" fill="#5a5a5a"/><rect x="1359.4" y="11.300" width="1" height="1.200" fill="#5a5a5a"/><rect x="1364.4" y="11.300" width="1" height="1.200" fill="#5a5a5a"/><rect x="1374.4" y="11.300" width="1" height="1.200" fill="#5a5a5a"/><rect x="1379.4" y="11.300" width="1" height="1.200" fill="#5a5a5a"/><rect x="1384.4" y="11.300" width="1" height="1.200" fill="#5a5a5a"/><rect x="1389.4" y="11.300" width="1" height="1.200" fill="#5a5a5a"/><rect x="1399.4" y="11.300" width="1" height="1.200" fill="#5a5a5a"/><rect x="1404.4" y="11.300" width="1" height="1.200" fill="#5a5a5a"/><rect x="1409.4" y="11.300" width="1" height="1.200" fill="#5a5a5a"/><rect x="1414.4" y="11.300" width="1" height="1.200" fill="#5a5a5a"/><rect x="1424.4" y="11.300" width="1" height="1.200" fill="#5a5a5a"/><rect x="1429.4" y="11.300" width="1" height="1.200" fill="#5a5a5a"/><rect x="1434.4" y="11.300" width="1" height="1.200" fill="#5a5a5a"/><rect x="1439.4" y="11.300" width="1" height="1.200" fill="#5a5a5a"/><rect x="1449.4" y="11.300" width="1" height="1.200" fill="#5a5a5a"/><rect x="1454.4" y="11.300" width="1" height="1.200" fill="#5a5a5a"/><rect x="1459.4" y="11.300" width="1" height="1.200" fill="#5a5a5a"/><rect x="1464.4" y="11.300" width="1" height="1.200" fill="#5a5a5a"/><rect x="1474.4" y="11.300" width="1" height="1.200" fill="#5a5a5a"/><rect x="1479.4" y="11.300" width="1" height="1.200" fill="#5a5a5a"/><rect x="1484.4" y="11.300" width="1" height="1.200" fill="#5a5a5a"/><rect x="1489.4" y="11.300" width="1" height="1.200" fill="#5a5a5a"/><rect x="1499.4" y="11.300" width="1" height="1.200" fill="#5a5a5a"/><rect x="1504.4" y="11.300" width="1" height="1.200" fill="#5a5a5a"/><rect x="1509.4" y="11.300" width="1" height="1.200" fill="#5a5a5a"/><rect x="1514.4" y="11.300" width="1" height="1.200" fill="#5a5a5a"/><rect x="1524.4" y="11.300" width="1" height="1.200" fill="#5a5a5a"/><rect x="1529.4" y="11.300" width="1" height="1.200" fill="#5a5a5a"/></svg>
<div style="left:407px;top:77.5px;width:1px;height:8px;background:#bdbdbd;"></div>
<div style="left:30px;top:88.5px;width:12.5px;height:946px;background:#474747;"></div>
<svg style="left:30px;top:88.5px;font-family:'Liberation Sans',sans-serif;overflow:hidden;" width="12.5" height="946" viewBox="0 0 12.5 946"><rect x="0" y="8.200000000000003" width="12.500" height="1" fill="#565656"/><text x="6.400" y="14.5" font-size="6.500" text-anchor="middle" fill="#a6a6a6">3</text><text x="6.400" y="20.5" font-size="6.500" text-anchor="middle" fill="#a6a6a6">5</text><text x="6.400" y="26.5" font-size="6.500" text-anchor="middle" fill="#a6a6a6">0</text><rect x="0" y="33.2" width="12.500" height="1" fill="#565656"/><text x="6.400" y="39.5" font-size="6.500" text-anchor="middle" fill="#a6a6a6">3</text><text x="6.400" y="45.5" font-size="6.500" text-anchor="middle" fill="#a6a6a6">0</text><text x="6.400" y="51.5" font-size="6.500" text-anchor="middle" fill="#a6a6a6">0</text><rect x="0" y="58.2" width="12.500" height="1" fill="#565656"/><text x="6.400" y="64.5" font-size="6.500" text-anchor="middle" fill="#a6a6a6">2</text><text x="6.400" y="70.5" font-size="6.500" text-anchor="middle" fill="#a6a6a6">5</text><text x="6.400" y="76.5" font-size="6.500" text-anchor="middle" fill="#a6a6a6">0</text><rect x="0" y="83.2" width="12.500" height="1" fill="#565656"/><text x="6.400" y="89.5" font-size="6.500" text-anchor="middle" fill="#a6a6a6">2</text><text x="6.400" y="95.5" font-size="6.500" text-anchor="middle" fill="#a6a6a6">0</text><text x="6.400" y="101.5" font-size="6.500" text-anchor="middle" fill="#a6a6a6">0</text><rect x="0" y="108.2" width="12.500" height="1" fill="#565656"/><text x="6.400" y="114.5" font-size="6.500" text-anchor="middle" fill="#a6a6a6">1</text><text x="6.400" y="120.5" font-size="6.500" text-anchor="middle" fill="#a6a6a6">5</text><text x="6.400" y="126.5" font-size="6.500" text-anchor="middle" fill="#a6a6a6">0</text><rect x="0" y="133.2" width="12.500" height="1" fill="#565656"/><text x="6.400" y="139.5" font-size="6.500" text-anchor="middle" fill="#a6a6a6">1</text><text x="6.400" y="145.5" font-size="6.500" text-anchor="middle" fill="#a6a6a6">0</text><text x="6.400" y="151.5" font-size="6.500" text-anchor="middle" fill="#a6a6a6">0</text><rect x="0" y="158.2" width="12.500" height="1" fill="#565656"/><text x="6.400" y="164.5" font-size="6.500" text-anchor="middle" fill="#a6a6a6">5</text><text x="6.400" y="170.5" font-size="6.500" text-anchor="middle" fill="#a6a6a6">0</text><rect x="0" y="183.2" width="12.500" height="1" fill="#565656"/><text x="6.400" y="189.5" font-size="6.500" text-anchor="middle" fill="#a6a6a6">0</text><rect x="0" y="208.2" width="12.500" height="1" fill="#565656"/><text x="6.400" y="214.5" font-size="6.500" text-anchor="middle" fill="#a6a6a6">5</text><text x="6.400" y="220.5" font-size="6.500" text-anchor="middle" fill="#a6a6a6">0</text><rect x="0" y="233.2" width="12.500" height="1" fill="#565656"/><text x="6.400" y="239.5" font-size="6.500" text-anchor="middle" fill="#a6a6a6">1</text><text x="6.400" y="245.5" font-size="6.500" text-anchor="middle" fill="#a6a6a6">0</text><text x="6.400" y="251.5" font-size="6.500" text-anchor="middle" fill="#a6a6a6">0</text><rect x="0" y="258.2" width="12.500" height="1" fill="#565656"/><text x="6.400" y="264.5" font-size="6.500" text-anchor="middle" fill="#a6a6a6">1</text><text x="6.400" y="270.5" font-size="6.500" text-anchor="middle" fill="#a6a6a6">5</text><text x="6.400" y="276.5" font-size="6.500" text-anchor="middle" fill="#a6a6a6">0</text><rect x="0" y="283.2" width="12.500" height="1" fill="#565656"/><text x="6.400" y="289.5" font-size="6.500" text-anchor="middle" fill="#a6a6a6">2</text><text x="6.400" y="295.5" font-size="6.500" text-anchor="middle" fill="#a6a6a6">0</text><text x="6.400" y="301.5" font-size="6.500" text-anchor="middle" fill="#a6a6a6">0</text><rect x="0" y="308.2" width="12.500" height="1" fill="#565656"/><text x="6.400" y="314.5" font-size="6.500" text-anchor="middle" fill="#a6a6a6">2</text><text x="6.400" y="320.5" font-size="6.500" text-anchor="middle" fill="#a6a6a6">5</text><text x="6.400" y="326.5" font-size="6.500" text-anchor="middle" fill="#a6a6a6">0</text><rect x="0" y="333.2" width="12.500" height="1" fill="#565656"/><text x="6.400" y="339.5" font-size="6.500" text-anchor="middle" fill="#a6a6a6">3</text><text x="6.400" y="345.5" font-size="6.500" text-anchor="middle" fill="#a6a6a6">0</text><text x="6.400" y="351.5" font-size="6.500" text-anchor="middle" fill="#a6a6a6">0</text><rect x="0" y="358.2" width="12.500" height="1" fill="#565656"/><text x="6.400" y="364.5" font-size="6.500" text-anchor="middle" fill="#a6a6a6">3</text><text x="6.400" y="370.5" font-size="6.500" text-anchor="middle" fill="#a6a6a6">5</text><text x="6.400" y="376.5" font-size="6.500" text-anchor="middle" fill="#a6a6a6">0</text><rect x="0" y="383.2" width="12.500" height="1" fill="#565656"/><text x="6.400" y="389.5" font-size="6.500" text-anchor="middle" fill="#a6a6a6">4</text><text x="6.400" y="395.5" font-size="6.500" text-anchor="middle" fill="#a6a6a6">0</text><text x="6.400" y="401.5" font-size="6.500" text-anchor="middle" fill="#a6a6a6">0</text><rect x="0" y="408.2" width="12.500" height="1" fill="#565656"/><text x="6.400" y="414.5" font-size="6.500" text-anchor="middle" fill="#a6a6a6">4</text><text x="6.400" y="420.5" font-size="6.500" text-anchor="middle" fill="#a6a6a6">5</text><text x="6.400" y="426.5" font-size="6.500" text-anchor="middle" fill="#a6a6a6">0</text><rect x="0" y="433.2" width="12.500" height="1" fill="#565656"/><text x="6.400" y="439.5" font-size="6.500" text-anchor="middle" fill="#a6a6a6">5</text><text x="6.400" y="445.5" font-size="6.500" text-anchor="middle" fill="#a6a6a6">0</text><text x="6.400" y="451.5" font-size="6.500" text-anchor="middle" fill="#a6a6a6">0</text><rect x="0" y="458.2" width="12.500" height="1" fill="#565656"/><text x="6.400" y="464.5" font-size="6.500" text-anchor="middle" fill="#a6a6a6">5</text><text x="6.400" y="470.5" font-size="6.500" text-anchor="middle" fill="#a6a6a6">5</text><text x="6.400" y="476.5" font-size="6.500" text-anchor="middle" fill="#a6a6a6">0</text><rect x="0" y="483.2" width="12.500" height="1" fill="#565656"/><text x="6.400" y="489.5" font-size="6.500" text-anchor="middle" fill="#a6a6a6">6</text><text x="6.400" y="495.5" font-size="6.500" text-anchor="middle" fill="#a6a6a6">0</text><text x="6.400" y="501.5" font-size="6.500" text-anchor="middle" fill="#a6a6a6">0</text><rect x="0" y="508.2" width="12.500" height="1" fill="#565656"/><text x="6.400" y="514.5" font-size="6.500" text-anchor="middle" fill="#a6a6a6">6</text><text x="6.400" y="520.5" font-size="6.500" text-anchor="middle" fill="#a6a6a6">5</text><text x="6.400" y="526.5" font-size="6.500" text-anchor="middle" fill="#a6a6a6">0</text><rect x="0" y="533.2" width="12.500" height="1" fill="#565656"/><text x="6.400" y="539.5" font-size="6.500" text-anchor="middle" fill="#a6a6a6">7</text><text x="6.400" y="545.5" font-size="6.500" text-anchor="middle" fill="#a6a6a6">0</text><text x="6.400" y="551.5" font-size="6.500" text-anchor="middle" fill="#a6a6a6">0</text><rect x="0" y="558.2" width="12.500" height="1" fill="#565656"/><text x="6.400" y="564.5" font-size="6.500" text-anchor="middle" fill="#a6a6a6">7</text><text x="6.400" y="570.5" font-size="6.500" text-anchor="middle" fill="#a6a6a6">5</text><text x="6.400" y="576.5" font-size="6.500" text-anchor="middle" fill="#a6a6a6">0</text><rect x="0" y="583.2" width="12.500" height="1" fill="#565656"/><text x="6.400" y="589.5" font-size="6.500" text-anchor="middle" fill="#a6a6a6">8</text><text x="6.400" y="595.5" font-size="6.500" text-anchor="middle" fill="#a6a6a6">0</text><text x="6.400" y="601.5" font-size="6.500" text-anchor="middle" fill="#a6a6a6">0</text><rect x="0" y="608.2" width="12.500" height="1" fill="#565656"/><text x="6.400" y="614.5" font-size="6.500" text-anchor="middle" fill="#a6a6a6">8</text><text x="6.400" y="620.5" font-size="6.500" text-anchor="middle" fill="#a6a6a6">5</text><text x="6.400" y="626.5" font-size="6.500" text-anchor="middle" fill="#a6a6a6">0</text><rect x="0" y="633.2" width="12.500" height="1" fill="#565656"/><text x="6.400" y="639.5" font-size="6.500" text-anchor="middle" fill="#a6a6a6">9</text><text x="6.400" y="645.5" font-size="6.500" text-anchor="middle" fill="#a6a6a6">0</text><text x="6.400" y="651.5" font-size="6.500" text-anchor="middle" fill="#a6a6a6">0</text><rect x="0" y="658.2" width="12.500" height="1" fill="#565656"/><text x="6.400" y="664.5" font-size="6.500" text-anchor="middle" fill="#a6a6a6">9</text><text x="6.400" y="670.5" font-size="6.500" text-anchor="middle" fill="#a6a6a6">5</text><text x="6.400" y="676.5" font-size="6.500" text-anchor="middle" fill="#a6a6a6">0</text><rect x="0" y="683.2" width="12.500" height="1" fill="#565656"/><text x="6.400" y="689.5" font-size="6.500" text-anchor="middle" fill="#a6a6a6">1</text><text x="6.400" y="695.5" font-size="6.500" text-anchor="middle" fill="#a6a6a6">0</text><text x="6.400" y="701.5" font-size="6.500" text-anchor="middle" fill="#a6a6a6">0</text><text x="6.400" y="707.5" font-size="6.500" text-anchor="middle" fill="#a6a6a6">0</text><rect x="0" y="708.2" width="12.500" height="1" fill="#565656"/><text x="6.400" y="714.5" font-size="6.500" text-anchor="middle" fill="#a6a6a6">1</text><text x="6.400" y="720.5" font-size="6.500" text-anchor="middle" fill="#a6a6a6">0</text><text x="6.400" y="726.5" font-size="6.500" text-anchor="middle" fill="#a6a6a6">5</text><text x="6.400" y="732.5" font-size="6.500" text-anchor="middle" fill="#a6a6a6">0</text><rect x="0" y="733.2" width="12.500" height="1" fill="#565656"/><text x="6.400" y="739.5" font-size="6.500" text-anchor="middle" fill="#a6a6a6">1</text><text x="6.400" y="745.5" font-size="6.500" text-anchor="middle" fill="#a6a6a6">1</text><text x="6.400" y="751.5" font-size="6.500" text-anchor="middle" fill="#a6a6a6">0</text><text x="6.400" y="757.5" font-size="6.500" text-anchor="middle" fill="#a6a6a6">0</text><rect x="0" y="758.2" width="12.500" height="1" fill="#565656"/><text x="6.400" y="764.5" font-size="6.500" text-anchor="middle" fill="#a6a6a6">1</text><text x="6.400" y="770.5" font-size="6.500" text-anchor="middle" fill="#a6a6a6">1</text><text x="6.400" y="776.5" font-size="6.500" text-anchor="middle" fill="#a6a6a6">5</text><text x="6.400" y="782.5" font-size="6.500" text-anchor="middle" fill="#a6a6a6">0</text><rect x="0" y="783.2" width="12.500" height="1" fill="#565656"/><text x="6.400" y="789.5" font-size="6.500" text-anchor="middle" fill="#a6a6a6">1</text><text x="6.400" y="795.5" font-size="6.500" text-anchor="middle" fill="#a6a6a6">2</text><text x="6.400" y="801.5" font-size="6.500" text-anchor="middle" fill="#a6a6a6">0</text><text x="6.400" y="807.5" font-size="6.500" text-anchor="middle" fill="#a6a6a6">0</text><rect x="0" y="808.2" width="12.500" height="1" fill="#565656"/><text x="6.400" y="814.5" font-size="6.500" text-anchor="middle" fill="#a6a6a6">1</text><text x="6.400" y="820.5" font-size="6.500" text-anchor="middle" fill="#a6a6a6">2</text><text x="6.400" y="826.5" font-size="6.500" text-anchor="middle" fill="#a6a6a6">5</text><text x="6.400" y="832.5" font-size="6.500" text-anchor="middle" fill="#a6a6a6">0</text><rect x="0" y="833.2" width="12.500" height="1" fill="#565656"/><text x="6.400" y="839.5" font-size="6.500" text-anchor="middle" fill="#a6a6a6">1</text><text x="6.400" y="845.5" font-size="6.500" text-anchor="middle" fill="#a6a6a6">3</text><text x="6.400" y="851.5" font-size="6.500" text-anchor="middle" fill="#a6a6a6">0</text><text x="6.400" y="857.5" font-size="6.500" text-anchor="middle" fill="#a6a6a6">0</text><rect x="0" y="858.2" width="12.500" height="1" fill="#565656"/><text x="6.400" y="864.5" font-size="6.500" text-anchor="middle" fill="#a6a6a6">1</text><text x="6.400" y="870.5" font-size="6.500" text-anchor="middle" fill="#a6a6a6">3</text><text x="6.400" y="876.5" font-size="6.500" text-anchor="middle" fill="#a6a6a6">5</text><text x="6.400" y="882.5" font-size="6.500" text-anchor="middle" fill="#a6a6a6">0</text><rect x="0" y="883.2" width="12.500" height="1" fill="#565656"/><text x="6.400" y="889.5" font-size="6.500" text-anchor="middle" fill="#a6a6a6">1</text><text x="6.400" y="895.5" font-size="6.500" text-anchor="middle" fill="#a6a6a6">4</text><text x="6.400" y="901.5" font-size="6.500" text-anchor="middle" fill="#a6a6a6">0</text><text x="6.400" y="907.5" font-size="6.500" text-anchor="middle" fill="#a6a6a6">0</text><rect x="0" y="908.2" width="12.500" height="1" fill="#565656"/><text x="6.400" y="914.5" font-size="6.500" text-anchor="middle" fill="#a6a6a6">1</text><text x="6.400" y="920.5" font-size="6.500" text-anchor="middle" fill="#a6a6a6">4</text><text x="6.400" y="926.5" font-size="6.500" text-anchor="middle" fill="#a6a6a6">5</text><text x="6.400" y="932.5" font-size="6.500" text-anchor="middle" fill="#a6a6a6">0</text><rect x="0" y="933.2" width="12.500" height="1" fill="#565656"/><text x="6.400" y="939.5" font-size="6.500" text-anchor="middle" fill="#a6a6a6">1</text><text x="6.400" y="945.5" font-size="6.500" text-anchor="middle" fill="#a6a6a6">5</text><text x="6.400" y="951.5" font-size="6.500" text-anchor="middle" fill="#a6a6a6">0</text><text x="6.400" y="957.5" font-size="6.500" text-anchor="middle" fill="#a6a6a6">0</text><rect x="11.300" y="3.5" width="1.200" height="1" fill="#5a5a5a"/><rect x="11.300" y="13.5" width="1.200" height="1" fill="#5a5a5a"/><rect x="11.300" y="18.5" width="1.200" height="1" fill="#5a5a5a"/><rect x="11.300" y="23.5" width="1.200" height="1" fill="#5a5a5a"/><rect x="11.300" y="28.5" width="1.200" height="1" fill="#5a5a5a"/><rect x="11.300" y="38.5" width="1.200" height="1" fill="#5a5a5a"/><rect x="11.300" y="43.5" width="1.200" height="1" fill="#5a5a5a"/><rect x="11.300" y="48.5" width="1.200" height="1" fill="#5a5a5a"/><rect x="11.300" y="53.5" width="1.200" height="1" fill="#5a5a5a"/><rect x="11.300" y="63.5" width="1.200" height="1" fill="#5a5a5a"/><rect x="11.300" y="68.5" width="1.200" height="1" fill="#5a5a5a"/><rect x="11.300" y="73.5" width="1.200" height="1" fill="#5a5a5a"/><rect x="11.300" y="78.5" width="1.200" height="1" fill="#5a5a5a"/><rect x="11.300" y="88.5" width="1.200" height="1" fill="#5a5a5a"/><rect x="11.300" y="93.5" width="1.200" height="1" fill="#5a5a5a"/><rect x="11.300" y="98.5" width="1.200" height="1" fill="#5a5a5a"/><rect x="11.300" y="103.5" width="1.200" height="1" fill="#5a5a5a"/><rect x="11.300" y="113.5" width="1.200" height="1" fill="#5a5a5a"/><rect x="11.300" y="118.5" width="1.200" height="1" fill="#5a5a5a"/><rect x="11.300" y="123.5" width="1.200" height="1" fill="#5a5a5a"/><rect x="11.300" y="128.5" width="1.200" height="1" fill="#5a5a5a"/><rect x="11.300" y="138.5" width="1.200" height="1" fill="#5a5a5a"/><rect x="11.300" y="143.5" width="1.200" height="1" fill="#5a5a5a"/><rect x="11.300" y="148.5" width="1.200" height="1" fill="#5a5a5a"/><rect x="11.300" y="153.5" width="1.200" height="1" fill="#5a5a5a"/><rect x="11.300" y="163.5" width="1.200" height="1" fill="#5a5a5a"/><rect x="11.300" y="168.5" width="1.200" height="1" fill="#5a5a5a"/><rect x="11.300" y="173.5" width="1.200" height="1" fill="#5a5a5a"/><rect x="11.300" y="178.5" width="1.200" height="1" fill="#5a5a5a"/><rect x="11.300" y="188.5" width="1.200" height="1" fill="#5a5a5a"/><rect x="11.300" y="193.5" width="1.200" height="1" fill="#5a5a5a"/><rect x="11.300" y="198.5" width="1.200" height="1" fill="#5a5a5a"/><rect x="11.300" y="203.5" width="1.200" height="1" fill="#5a5a5a"/><rect x="11.300" y="213.5" width="1.200" height="1" fill="#5a5a5a"/><rect x="11.300" y="218.5" width="1.200" height="1" fill="#5a5a5a"/><rect x="11.300" y="223.5" width="1.200" height="1" fill="#5a5a5a"/><rect x="11.300" y="228.5" width="1.200" height="1" fill="#5a5a5a"/><rect x="11.300" y="238.5" width="1.200" height="1" fill="#5a5a5a"/><rect x="11.300" y="243.5" width="1.200" height="1" fill="#5a5a5a"/><rect x="11.300" y="248.5" width="1.200" height="1" fill="#5a5a5a"/><rect x="11.300" y="253.5" width="1.200" height="1" fill="#5a5a5a"/><rect x="11.300" y="263.5" width="1.200" height="1" fill="#5a5a5a"/><rect x="11.300" y="268.5" width="1.200" height="1" fill="#5a5a5a"/><rect x="11.300" y="273.5" width="1.200" height="1" fill="#5a5a5a"/><rect x="11.300" y="278.5" width="1.200" height="1" fill="#5a5a5a"/><rect x="11.300" y="288.5" width="1.200" height="1" fill="#5a5a5a"/><rect x="11.300" y="293.5" width="1.200" height="1" fill="#5a5a5a"/><rect x="11.300" y="298.5" width="1.200" height="1" fill="#5a5a5a"/><rect x="11.300" y="303.5" width="1.200" height="1" fill="#5a5a5a"/><rect x="11.300" y="313.5" width="1.200" height="1" fill="#5a5a5a"/><rect x="11.300" y="318.5" width="1.200" height="1" fill="#5a5a5a"/><rect x="11.300" y="323.5" width="1.200" height="1" fill="#5a5a5a"/><rect x="11.300" y="328.5" width="1.200" height="1" fill="#5a5a5a"/><rect x="11.300" y="338.5" width="1.200" height="1" fill="#5a5a5a"/><rect x="11.300" y="343.5" width="1.200" height="1" fill="#5a5a5a"/><rect x="11.300" y="348.5" width="1.200" height="1" fill="#5a5a5a"/><rect x="11.300" y="353.5" width="1.200" height="1" fill="#5a5a5a"/><rect x="11.300" y="363.5" width="1.200" height="1" fill="#5a5a5a"/><rect x="11.300" y="368.5" width="1.200" height="1" fill="#5a5a5a"/><rect x="11.300" y="373.5" width="1.200" height="1" fill="#5a5a5a"/><rect x="11.300" y="378.5" width="1.200" height="1" fill="#5a5a5a"/><rect x="11.300" y="388.5" width="1.200" height="1" fill="#5a5a5a"/><rect x="11.300" y="393.5" width="1.200" height="1" fill="#5a5a5a"/><rect x="11.300" y="398.5" width="1.200" height="1" fill="#5a5a5a"/><rect x="11.300" y="403.5" width="1.200" height="1" fill="#5a5a5a"/><rect x="11.300" y="413.5" width="1.200" height="1" fill="#5a5a5a"/><rect x="11.300" y="418.5" width="1.200" height="1" fill="#5a5a5a"/><rect x="11.300" y="423.5" width="1.200" height="1" fill="#5a5a5a"/><rect x="11.300" y="428.5" width="1.200" height="1" fill="#5a5a5a"/><rect x="11.300" y="438.5" width="1.200" height="1" fill="#5a5a5a"/><rect x="11.300" y="443.5" width="1.200" height="1" fill="#5a5a5a"/><rect x="11.300" y="448.5" width="1.200" height="1" fill="#5a5a5a"/><rect x="11.300" y="453.5" width="1.200" height="1" fill="#5a5a5a"/><rect x="11.300" y="463.5" width="1.200" height="1" fill="#5a5a5a"/><rect x="11.300" y="468.5" width="1.200" height="1" fill="#5a5a5a"/><rect x="11.300" y="473.5" width="1.200" height="1" fill="#5a5a5a"/><rect x="11.300" y="478.5" width="1.200" height="1" fill="#5a5a5a"/><rect x="11.300" y="488.5" width="1.200" height="1" fill="#5a5a5a"/><rect x="11.300" y="493.5" width="1.200" height="1" fill="#5a5a5a"/><rect x="11.300" y="498.5" width="1.200" height="1" fill="#5a5a5a"/><rect x="11.300" y="503.5" width="1.200" height="1" fill="#5a5a5a"/><rect x="11.300" y="513.5" width="1.200" height="1" fill="#5a5a5a"/><rect x="11.300" y="518.5" width="1.200" height="1" fill="#5a5a5a"/><rect x="11.300" y="523.5" width="1.200" height="1" fill="#5a5a5a"/><rect x="11.300" y="528.5" width="1.200" height="1" fill="#5a5a5a"/><rect x="11.300" y="538.5" width="1.200" height="1" fill="#5a5a5a"/><rect x="11.300" y="543.5" width="1.200" height="1" fill="#5a5a5a"/><rect x="11.300" y="548.5" width="1.200" height="1" fill="#5a5a5a"/><rect x="11.300" y="553.5" width="1.200" height="1" fill="#5a5a5a"/><rect x="11.300" y="563.5" width="1.200" height="1" fill="#5a5a5a"/><rect x="11.300" y="568.5" width="1.200" height="1" fill="#5a5a5a"/><rect x="11.300" y="573.5" width="1.200" height="1" fill="#5a5a5a"/><rect x="11.300" y="578.5" width="1.200" height="1" fill="#5a5a5a"/><rect x="11.300" y="588.5" width="1.200" height="1" fill="#5a5a5a"/><rect x="11.300" y="593.5" width="1.200" height="1" fill="#5a5a5a"/><rect x="11.300" y="598.5" width="1.200" height="1" fill="#5a5a5a"/><rect x="11.300" y="603.5" width="1.200" height="1" fill="#5a5a5a"/><rect x="11.300" y="613.5" width="1.200" height="1" fill="#5a5a5a"/><rect x="11.300" y="618.5" width="1.200" height="1" fill="#5a5a5a"/><rect x="11.300" y="623.5" width="1.200" height="1" fill="#5a5a5a"/><rect x="11.300" y="628.5" width="1.200" height="1" fill="#5a5a5a"/><rect x="11.300" y="638.5" width="1.200" height="1" fill="#5a5a5a"/><rect x="11.300" y="643.5" width="1.200" height="1" fill="#5a5a5a"/><rect x="11.300" y="648.5" width="1.200" height="1" fill="#5a5a5a"/><rect x="11.300" y="653.5" width="1.200" height="1" fill="#5a5a5a"/><rect x="11.300" y="663.5" width="1.200" height="1" fill="#5a5a5a"/><rect x="11.300" y="668.5" width="1.200" height="1" fill="#5a5a5a"/><rect x="11.300" y="673.5" width="1.200" height="1" fill="#5a5a5a"/><rect x="11.300" y="678.5" width="1.200" height="1" fill="#5a5a5a"/><rect x="11.300" y="688.5" width="1.200" height="1" fill="#5a5a5a"/><rect x="11.300" y="693.5" width="1.200" height="1" fill="#5a5a5a"/><rect x="11.300" y="698.5" width="1.200" height="1" fill="#5a5a5a"/><rect x="11.300" y="703.5" width="1.200" height="1" fill="#5a5a5a"/><rect x="11.300" y="713.5" width="1.200" height="1" fill="#5a5a5a"/><rect x="11.300" y="718.5" width="1.200" height="1" fill="#5a5a5a"/><rect x="11.300" y="723.5" width="1.200" height="1" fill="#5a5a5a"/><rect x="11.300" y="728.5" width="1.200" height="1" fill="#5a5a5a"/><rect x="11.300" y="738.5" width="1.200" height="1" fill="#5a5a5a"/><rect x="11.300" y="743.5" width="1.200" height="1" fill="#5a5a5a"/><rect x="11.300" y="748.5" width="1.200" height="1" fill="#5a5a5a"/><rect x="11.300" y="753.5" width="1.200" height="1" fill="#5a5a5a"/><rect x="11.300" y="763.5" width="1.200" height="1" fill="#5a5a5a"/><rect x="11.300" y="768.5" width="1.200" height="1" fill="#5a5a5a"/><rect x="11.300" y="773.5" width="1.200" height="1" fill="#5a5a5a"/><rect x="11.300" y="778.5" width="1.200" height="1" fill="#5a5a5a"/><rect x="11.300" y="788.5" width="1.200" height="1" fill="#5a5a5a"/><rect x="11.300" y="793.5" width="1.200" height="1" fill="#5a5a5a"/><rect x="11.300" y="798.5" width="1.200" height="1" fill="#5a5a5a"/><rect x="11.300" y="803.5" width="1.200" height="1" fill="#5a5a5a"/><rect x="11.300" y="813.5" width="1.200" height="1" fill="#5a5a5a"/><rect x="11.300" y="818.5" width="1.200" height="1" fill="#5a5a5a"/><rect x="11.300" y="823.5" width="1.200" height="1" fill="#5a5a5a"/><rect x="11.300" y="828.5" width="1.200" height="1" fill="#5a5a5a"/><rect x="11.300" y="838.5" width="1.200" height="1" fill="#5a5a5a"/><rect x="11.300" y="843.5" width="1.200" height="1" fill="#5a5a5a"/><rect x="11.300" y="848.5" width="1.200" height="1" fill="#5a5a5a"/><rect x="11.300" y="853.5" width="1.200" height="1" fill="#5a5a5a"/><rect x="11.300" y="863.5" width="1.200" height="1" fill="#5a5a5a"/><rect x="11.300" y="868.5" width="1.200" height="1" fill="#5a5a5a"/><rect x="11.300" y="873.5" width="1.200" height="1" fill="#5a5a5a"/><rect x="11.300" y="878.5" width="1.200" height="1" fill="#5a5a5a"/><rect x="11.300" y="888.5" width="1.200" height="1" fill="#5a5a5a"/><rect x="11.300" y="893.5" width="1.200" height="1" fill="#5a5a5a"/><rect x="11.300" y="898.5" width="1.200" height="1" fill="#5a5a5a"/><rect x="11.300" y="903.5" width="1.200" height="1" fill="#5a5a5a"/><rect x="11.300" y="913.5" width="1.200" height="1" fill="#5a5a5a"/><rect x="11.300" y="918.5" width="1.200" height="1" fill="#5a5a5a"/><rect x="11.300" y="923.5" width="1.200" height="1" fill="#5a5a5a"/><rect x="11.300" y="928.5" width="1.200" height="1" fill="#5a5a5a"/><rect x="11.300" y="938.5" width="1.200" height="1" fill="#5a5a5a"/><rect x="11.300" y="943.5" width="1.200" height="1" fill="#5a5a5a"/></svg>
<div style="left:399.5px;top:272.4px;width:942.2px;height:585px;background:#000;"></div>
<svg style="left:424.3px;top:306.4px;" width="103.4" height="154.7" viewBox="17 18 676 1012">
<defs>
<filter id="b1" x="-5%" y="-5%" width="110%" height="110%"><feGaussianBlur stdDeviation="9"/></filter>
<filter id="b2" x="-5%" y="-5%" width="110%" height="110%"><feGaussianBlur stdDeviation="4"/></filter>
<filter id="bn" x="0" y="0" width="100%" height="100%"><feTurbulence type="fractalNoise" baseFrequency="0.060 0.030" numOctaves="3" seed="4" result="n"/><feColorMatrix in="n" type="matrix" values="0 0 0 0 0  0 0 0 0 0  0 0 0 0 0  0.900 0.900 0 0 -0.620"/></filter>
<linearGradient id="bg1" x1="0" y1="0" x2="0" y2="1"><stop offset="0" stop-color="#8e9c94"/><stop offset="0.035" stop-color="#84927e"/><stop offset="0.080" stop-color="#7a7c42"/><stop offset="0.180" stop-color="#76763a"/><stop offset="0.260" stop-color="#8a8430"/><stop offset="0.500" stop-color="#b08c2a"/><stop offset="0.540" stop-color="#b9ab5c"/><stop offset="0.800" stop-color="#b4aa5a"/><stop offset="1" stop-color="#9c9a48"/></linearGradient>
<linearGradient id="bearg" x1="0" y1="0" x2="1" y2="0.300"><stop offset="0" stop-color="#936236"/><stop offset="0.400" stop-color="#7c4a28"/><stop offset="1" stop-color="#61391f"/></linearGradient>
<clipPath id="bclip"><rect x="17" y="18" width="676" height="1012"/></clipPath>
</defs>
<g clip-path="url(#bclip)">
<rect x="17" y="18" width="676" height="1012" fill="url(#bg1)"/>
<g filter="url(#b1)">
<ellipse cx="350" cy="120" rx="360" ry="60" fill="#747438"/>
<ellipse cx="560" cy="150" rx="120" ry="60" fill="#8a8642"/>
<ellipse cx="150" cy="110" rx="120" ry="40" fill="#6c6e32"/>
<ellipse cx="110" cy="330" rx="150" ry="200" fill="#d6a52e"/>
<ellipse cx="60" cy="240" rx="60" ry="90" fill="#e2b63c"/>
<ellipse cx="190" cy="260" rx="60" ry="70" fill="#deb036"/>
<ellipse cx="80" cy="480" rx="80" ry="70" fill="#c79a2c"/>
<ellipse cx="590" cy="380" rx="140" ry="190" fill="#cf9f2c"/>
<ellipse cx="540" cy="230" rx="70" ry="60" fill="#e0b238"/>
<ellipse cx="660" cy="300" rx="50" ry="110" fill="#d8a832"/>
<ellipse cx="620" cy="500" rx="90" ry="70" fill="#b48a26"/>
<rect x="17" y="560" width="676" height="480" fill="#c8b964"/>
<ellipse cx="90" cy="640" rx="110" ry="70" fill="#d6c878"/>
<ellipse cx="620" cy="680" rx="90" ry="110" fill="#d0c070"/>
<ellipse cx="100" cy="860" rx="100" ry="120" fill="#c6ba68"/>
<ellipse cx="620" cy="900" rx="90" ry="110" fill="#beb462"/>
<ellipse cx="350" cy="1020" rx="360" ry="50" fill="#a8a852"/>
</g>
<g filter="url(#b2)">
<path d="M262 185c8-20 40-22 55-2 30-8 65-8 95 2 15-16 48-12 58 8 4 20-8 40-22 52 14 45 14 95 2 135 40 35 70 80 82 150 14 80 12 170-4 250-10 60-28 130-55 170-25 30-70 35-98 12-18-22-28-55-32-90-6 30-18 65-35 85-22 20-55 20-75 0-28-35-40-90-38-150 2-40 8-70 12-100-14 18-26 40-42 52-28 12-46-10-38-42 12-55 38-125 62-195 18-70 48-140 92-182-12-45-10-95 2-140-14-14-24-32-21-45z" fill="url(#bearg)"/>
<ellipse cx="348" cy="290" rx="100" ry="105" fill="#80502c"/>
<ellipse cx="300" cy="420" rx="55" ry="40" fill="#9a6a3c" opacity="0.800"/>
<ellipse cx="330" cy="520" rx="70" ry="110" fill="#8c5a32" opacity="0.800"/>
<ellipse cx="343" cy="300" rx="36" ry="44" fill="#966840"/>
<ellipse cx="342" cy="285" rx="15" ry="11" fill="#24160e"/>
<ellipse cx="343" cy="320" rx="17" ry="13" fill="#d9aaa2"/>
<ellipse cx="312" cy="245" rx="7" ry="6" fill="#24160e"/>
<ellipse cx="378" cy="248" rx="7" ry="6" fill="#24160e"/>
<ellipse cx="290" cy="195" rx="15" ry="15" fill="#472a16"/>
<ellipse cx="440" cy="215" rx="15" ry="15" fill="#472a16"/>
<path d="M232 760c-8 60 4 130 36 175 20 18 48 14 60-8 8-50 6-110 0-165z" fill="#4a2c18"/>
<path d="M352 800c0 60 12 120 36 160 30 18 62 8 78-18 26-50 36-110 34-160z" fill="#512f1a"/>
<path d="M425 520c12 60 4 140-22 195-14 28-46 30-54 2 2-55 16-125 30-185z" fill="#70462a"/>
<path d="M240 640c20 30 60 60 100 70" stroke="#4a2c18" stroke-width="14" fill="none" opacity="0.600"/>
</g>
<rect x="17" y="18" width="676" height="1012" filter="url(#bn)" fill="#000" opacity="0.280"/>
</g>
</svg>
<svg style="left:540.06px;top:299.9px;" width="102" height="161.2" viewBox="13 12 644 1018">
<defs>
<filter id="p1" x="-5%" y="-5%" width="110%" height="110%"><feGaussianBlur stdDeviation="12"/></filter>
<filter id="p2" x="-5%" y="-5%" width="110%" height="110%"><feGaussianBlur stdDeviation="4"/></filter>
<filter id="p3" x="-5%" y="-5%" width="110%" height="110%"><feGaussianBlur stdDeviation="2"/></filter>
<filter id="pn" x="0" y="0" width="100%" height="100%"><feTurbulence type="fractalNoise" baseFrequency="0.050" numOctaves="3" seed="9" result="n"/><feColorMatrix in="n" type="matrix" values="0 0 0 0 0  0 0 0 0 0  0 0 0 0 0  0.900 0.900 0 0 -0.650"/></filter>
<linearGradient id="trunk" x1="0" y1="0" x2="1" y2="0"><stop offset="0" stop-color="#4e3e2c"/><stop offset="0.450" stop-color="#6e5840"/><stop offset="1" stop-color="#544434"/></linearGradient>
<clipPath id="pclip"><rect x="13" y="12" width="644" height="1018"/></clipPath>
</defs>
<g clip-path="url(#pclip)">
<rect x="13" y="12" width="644" height="1018" fill="#69a34c"/>
<g filter="url(#p1)">
<ellipse cx="520" cy="60" rx="160" ry="70" fill="#b4d69a"/>
<ellipse cx="330" cy="120" rx="70" ry="90" fill="#5c9c46"/>
<ellipse cx="600" cy="230" rx="80" ry="100" fill="#458a3c"/>
<ellipse cx="470" cy="230" rx="90" ry="60" fill="#8cc470"/>
<ellipse cx="560" cy="420" rx="80" ry="70" fill="#4f9444"/>
<ellipse cx="620" cy="330" rx="40" ry="40" fill="#c9e2c0"/>
<ellipse cx="360" cy="265" rx="60" ry="25" fill="#b0c8a0"/>
<ellipse cx="600" cy="540" rx="60" ry="40" fill="#9cc88a"/>
<rect x="13" y="780" width="644" height="260" fill="#94957e"/>
<ellipse cx="120" cy="960" rx="150" ry="80" fill="#a4948a"/>
<ellipse cx="330" cy="900" rx="150" ry="70" fill="#8a9874"/>
</g>
<path d="M450 110L510 22" stroke="#d9dcc0" stroke-width="22" opacity="0.600" filter="url(#p2)"/>
<g filter="url(#p2)">
<path d="M13 12h252l8 280c-30 30-70 90-95 180-20 80-30 170-30 260L13 800z" fill="url(#trunk)"/>
<path d="M13 560c60 20 110 80 140 180l-20 120L13 900z" fill="#8a6c68" opacity="0.750"/>
<ellipse cx="330" cy="730" rx="170" ry="110" fill="#ddd6be"/>
<ellipse cx="310" cy="580" rx="170" ry="70" fill="#e6e2d4"/>
<ellipse cx="335" cy="442" rx="168" ry="132" fill="#f3f1e8"/>
<ellipse cx="250" cy="520" rx="70" ry="40" fill="#ddd8c6"/>
<ellipse cx="212" cy="357" rx="36" ry="34" fill="#141216"/>
<ellipse cx="460" cy="368" rx="30" ry="34" fill="#141216"/>
<ellipse cx="297" cy="435" rx="24" ry="33" fill="#19161b" transform="rotate(35 297 435)"/>
<ellipse cx="397" cy="440" rx="20" ry="31" fill="#19161b" transform="rotate(-28 397 440)"/>
<ellipse cx="355" cy="497" rx="24" ry="14" fill="#3a2c2c"/>
<path d="M315 522c25 14 55 14 80 0" stroke="#7a6a60" stroke-width="6" fill="none"/>
<path d="M110 560c30-30 70-35 110-20 50 18 90 40 115 65 20 35 30 75 25 115-50 28-160 38-260 22-20-50-20-125 10-182z" fill="#37272e"/>
<path d="M340 600c25-40 90-70 160-72 28 10 48 40 60 80 5 30-10 60-40 75-60 5-130-20-180-83z" fill="#1d191f"/>
<path d="M140 800c60-25 140-30 200-12l-20 40c-60 15-130 15-190 5z" fill="#4a3a3c"/>
</g>
<g filter="url(#p3)">
<ellipse cx="575" cy="830" rx="120" ry="230" fill="#56945a"/>
<ellipse cx="500" cy="640" rx="70" ry="50" fill="#2f6e36"/>
<ellipse cx="610" cy="680" rx="45" ry="60" fill="#7cbc84"/>
<ellipse cx="520" cy="760" rx="40" ry="50" fill="#5aa662"/>
<ellipse cx="600" cy="880" rx="50" ry="70" fill="#69b070"/>
<ellipse cx="500" cy="930" rx="45" ry="60" fill="#2f6e36"/>
<ellipse cx="640" cy="600" rx="18" ry="26" fill="#dcecdc"/>
<ellipse cx="470" cy="600" rx="30" ry="14" fill="#a8d4ac"/>
<ellipse cx="540" cy="690" rx="24" ry="12" fill="#b4dcb8"/>
<ellipse cx="560" cy="1000" rx="80" ry="30" fill="#4c9252"/>
<ellipse cx="600" cy="780" rx="22" ry="14" fill="#cfe8d2"/><ellipse cx="540" cy="850" rx="20" ry="12" fill="#c4e2c8"/><ellipse cx="620" cy="960" rx="24" ry="14" fill="#bcdcc0"/><ellipse cx="480" cy="700" rx="22" ry="12" fill="#d4ead6"/><ellipse cx="560" cy="610" rx="20" ry="10" fill="#cfe8d2"/><ellipse cx="470" cy="830" rx="18" ry="30" fill="#9cc8a0"/>
<path d="M60 850l250-40M100 900l60-60M200 930l40-80M290 940l30-90M380 950l20-80M440 960l-10-70" stroke="#74966a" stroke-width="14" stroke-linecap="round" opacity="0.800"/>
</g>
<rect x="13" y="12" width="644" height="1018" filter="url(#pn)" fill="#000" opacity="0.160"/>
</g>
</svg>
<svg style="left:424.4px;top:480.5px;" width="129.8" height="172" viewBox="25 37 740 981">
<defs>
<filter id="t2" x="-5%" y="-5%" width="110%" height="110%"><feGaussianBlur stdDeviation="3.500"/></filter>
<filter id="t1" x="-5%" y="-5%" width="110%" height="110%"><feGaussianBlur stdDeviation="14"/></filter>
<filter id="tn" x="0" y="0" width="100%" height="100%"><feTurbulence type="fractalNoise" baseFrequency="0.080" numOctaves="2" seed="3" result="n"/><feColorMatrix in="n" type="matrix" values="0 0 0 0 0  0 0 0 0 0  0 0 0 0 0  0.900 0.900 0 0 -0.700"/></filter>
<linearGradient id="wall" x1="0" y1="0" x2="1" y2="0.450"><stop offset="0" stop-color="#d6ccbe"/><stop offset="0.550" stop-color="#c6bbad"/><stop offset="1" stop-color="#a99d8f"/></linearGradient>
<linearGradient id="skin" x1="0" y1="0" x2="0.300" y2="1"><stop offset="0" stop-color="#6e3a2a"/><stop offset="0.500" stop-color="#a8644c"/><stop offset="1" stop-color="#c48a72"/></linearGradient>
<linearGradient id="shirt" x1="0" y1="0" x2="1" y2="0"><stop offset="0" stop-color="#d4d0c8"/><stop offset="0.450" stop-color="#f7f5f0"/><stop offset="1" stop-color="#e2ded6"/></linearGradient>
<clipPath id="tclip"><rect x="25" y="37" width="740" height="981"/></clipPath>
</defs>
<g clip-path="url(#tclip)">
<rect x="25" y="37" width="740" height="981" fill="url(#wall)"/>
<g filter="url(#t2)">
<path d="M58 37h340l22 150-90 55-90 30-95-40-70-55z" fill="url(#skin)"/>
<path d="M60 200l55 8 125 64 190-98 15 228-45 240-30 376H250l-70-320-80-300-45-140z" fill="url(#shirt)"/>
<path d="M180 420c20 180 40 380 70 598" stroke="#cfcac0" stroke-width="16" fill="none" opacity="0.700"/>
<path d="M25 300l40-55 45 175 90 380 50 218H25z" fill="#161716"/>
<path d="M440 225l80 85 245 90v618H370l30-376 40-240z" fill="#1a1b1a"/>
<path d="M440 400l-40 240 70-110z" fill="#0e0e0e"/>
<path d="M100 215l150 75-10 70-120 50-25-100z" fill="#0b0b0b"/>
<path d="M270 290l165-75 8 190-150-55z" fill="#0d0d0d"/>
<path d="M238 282l55 8 5 62-58 5z" fill="#191919"/>
<circle cx="273" cy="525" r="11" fill="#111"/>
<circle cx="308" cy="885" r="11" fill="#111"/>
<path d="M535 600l-72 180 24 8 68-175z" fill="#aab272"/>
<ellipse cx="560" cy="560" rx="80" ry="55" fill="#41603a" transform="rotate(40 560 560)"/>
<ellipse cx="500" cy="495" rx="42" ry="22" fill="#4f7040"/>
<ellipse cx="585" cy="510" rx="90" ry="80" fill="#dfe2cf"/>
<circle cx="555" cy="465" r="28" fill="#f4f4ea"/><circle cx="630" cy="520" r="30" fill="#f0f0e4"/><circle cx="600" cy="435" r="22" fill="#f6f6ee"/>
<circle cx="660" cy="480" r="18" fill="#f2f2e8"/><circle cx="680" cy="520" r="14" fill="#f4f4ea"/><circle cx="620" cy="575" r="20" fill="#ecece0"/><circle cx="540" cy="530" r="20" fill="#eeeedf"/>
<circle cx="590" cy="500" r="14" fill="#55763f"/><circle cx="565" cy="560" r="14" fill="#4a6a3a"/>
<path d="M600 850l60-80 70 20-10 50-110 20z" fill="#0c0c0e"/>
</g>
<g filter="url(#t1)" opacity="0.500">
<ellipse cx="600" cy="800" rx="90" ry="200" fill="#2e2f2d"/>
<ellipse cx="90" cy="700" rx="40" ry="250" fill="#2a2b29"/>
</g>
<rect x="25" y="37" width="740" height="981" filter="url(#tn)" fill="#000" opacity="0.100"/>
</g>
</svg>
<svg style="left:565.9px;top:479.3px;" width="171.2" height="171.3" viewBox="832 30 976 977">
<defs>
<filter id="w2" x="-5%" y="-5%" width="110%" height="110%"><feGaussianBlur stdDeviation="2"/></filter>
<filter id="wn" x="0" y="0" width="100%" height="100%"><feTurbulence type="fractalNoise" baseFrequency="0.300" numOctaves="2" seed="5" result="n"/><feColorMatrix in="n" type="matrix" values="0 0 0 0 1  0 0 0 0 0.900  0 0 0 0 0.800  0.900 0.900 0 0 -0.800"/><feComposite in2="SourceGraphic" operator="in"/></filter>
<linearGradient id="bt" x1="0" y1="0" x2="0" y2="1"><stop offset="0" stop-color="#573a31"/><stop offset="0.500" stop-color="#4a2d25"/><stop offset="1" stop-color="#553830"/></linearGradient>
</defs>
<rect x="832" y="30" width="976" height="977" fill="#ffffff"/>
<g filter="url(#w2)">
<path d="M1050 335c70 20 160 60 232 105l0 120c-70 45-160 85-232 108-55-80-60-250 0-333z" fill="url(#bt)"/>
<path d="M1610 343c-70 20-160 55-235 97l0 120c70 45 160 90 235 115 50-80 55-250 0-332z" fill="url(#bt)"/>
<rect x="1278" y="435" width="99" height="132" rx="10" fill="#52342c"/>
<path d="M1070 480c60 5 140 20 200 30M1080 560c60-10 130-25 190-35M1590 470c-60 5-140 25-205 40M1580 570c-60-15-130-30-195-40" stroke="#39211b" stroke-width="12" fill="none" opacity="0.700"/>
<path d="M1060 400c60 10 150 40 215 70M1600 400c-60 10-150 40-218 70" stroke="#684a40" stroke-width="14" fill="none" opacity="0.600"/>
</g>
<g filter="url(#wn)" opacity="0.250"><path d="M1050 335c70 20 160 60 232 105h93c75-42 165-77 235-97 55 82 50 252 0 332-75-25-165-70-235-115h-93c-70 45-160 85-232 108-55-80-60-250 0-333z" fill="#000"/></g>
</svg>
<svg style="left:760px;top:300px;" width="582" height="557" viewBox="760 300 582 557">
<defs><filter id="sk" x="-2%" y="-2%" width="104%" height="104%"><feGaussianBlur stdDeviation="0.500"/></filter>
<linearGradient id="hand" x1="0" y1="0" x2="0.300" y2="1"><stop offset="0" stop-color="#4a4a4a"/><stop offset="1" stop-color="#161616"/></linearGradient>
<radialGradient id="earL" cx="0.500" cy="0.500" r="0.600"><stop offset="0" stop-color="#0c0c0c"/><stop offset="0.700" stop-color="#161616"/><stop offset="1" stop-color="#303030"/></radialGradient></defs>
<g transform="translate(900 340) scale(0.23832)" filter="url(#sk)">
<!-- ear shading -->
<path d="M250 345C110 300 80 150 180 95c80-40 170 10 205 90-60 30-110 90-135 160z" fill="url(#earL)"/>
<path d="M825 335c140-45 170-190 70-245-80-40-165 10-200 95 60 30 105 85 130 150z" fill="url(#earL)"/>
<!-- soft hatching glow along the silhouette -->
<g fill="none" stroke="#ffffff" stroke-opacity="0.100" stroke-width="16" stroke-linecap="round" stroke-linejoin="round">
<path d="M255 370C150 340 70 250 105 160 140 70 250 35 320 85c40 28 70 65 90 105 80-8 170-8 250 0 20-40 50-80 95-108 75-45 180-5 210 85 30 90-45 175-145 205-8 50-10 100-6 155 4 50 45 90 60 160 15 80-30 160-100 200-20 12-40 20-60 25"/>
<path d="M255 370c8 50 8 105 2 160-6 45-50 90-65 150-18 80 20 155 85 195 20 12 38 22 58 38"/>
</g>
<!-- head -->
<path fill="none" stroke="#f2f2f2" stroke-width="4.400" stroke-linecap="round" stroke-linejoin="round" d="M255 370C150 340 70 250 105 160 140 70 250 35 320 85c40 28 70 65 90 105 80-8 170-8 250 0 20-40 50-80 95-108 75-45 180-5 210 85 30 90-45 175-145 205-8 50-10 100-6 155 4 50 45 90 60 160 15 80-30 160-100 200-20 12-40 20-60 25"/>
<path fill="none" stroke="#f2f2f2" stroke-width="4.400" stroke-linecap="round" stroke-linejoin="round" d="M255 370c8 50 8 105 2 160-6 45-50 90-65 150-18 80 20 155 85 195 20 12 38 22 58 38"/>
<path fill="none" stroke="#c4c4c4" stroke-width="2.800" stroke-linecap="round" stroke-linejoin="round" d="M250 345C130 310 85 200 125 140c45-75 150-85 205-30 25 25 42 50 55 75"/>
<path fill="none" stroke="#c4c4c4" stroke-width="2.800" stroke-linecap="round" stroke-linejoin="round" d="M825 335c115-35 165-140 125-205-40-70-145-80-200-25-25 25-42 52-55 80"/>
<path fill="none" stroke="#c4c4c4" stroke-width="2.800" stroke-linecap="round" stroke-linejoin="round" d="M385 185c-55 35-105 95-135 160M695 185c55 35 100 90 130 150"/>
<path fill="none" stroke="#666" stroke-width="2.400" stroke-linecap="round" d="M258 545c90-12 180-14 270-10 100 4 200-2 282-12"/>
<!-- nose -->
<path fill="none" stroke="#f2f2f2" stroke-width="4.400" stroke-linecap="round" stroke-linejoin="round" d="M462 672c5-35 45-52 85-48 45 4 78 30 72 65-8 40-45 72-85 68-40-5-78-40-72-85z"/>
<path d="M470 675c5-28 40-42 75-40 40 4 68 26 64 55-8 34-40 60-72 58-36-4-72-36-67-73z" fill="#2a2a2a"/>
<path fill="none" stroke="#c4c4c4" stroke-width="2.800" stroke-linecap="round" stroke-linejoin="round" d="M478 690c-2-30 30-52 65-50 35 2 62 20 60 45"/>
<!-- neck -->
<path fill="none" stroke="#c4c4c4" stroke-width="2.800" stroke-linecap="round" stroke-linejoin="round" d="M335 915l2 75M715 910l-3 70M335 990h62M712 980h-48"/>
<path d="M337 925h60v60h-60z" fill="#1c1c1c"/>
<!-- bowtie -->
<path fill="none" stroke="#f2f2f2" stroke-width="4.400" stroke-linecap="round" stroke-linejoin="round" d="M400 925c35-12 75-5 112 22 12-12 38-12 50 0 30-28 70-35 100-22 8 35 8 75 0 105-35 10-72-2-100-25-12 10-38 10-50 0-35 25-75 35-110 25-10-35-10-70-2-105z"/>
<path d="M402 927c35-10 72-4 108 22l2 50c-35 25-72 33-106 24-8-32-10-64-4-96zM662 927c-30-12-68-5-98 22l-2 50c28 22 64 32 98 24 8-32 8-64 2-96z" fill="#222"/>
<path fill="none" stroke="#c4c4c4" stroke-width="2.800" stroke-linecap="round" stroke-linejoin="round" d="M512 947c-4 18-4 36 0 58M562 947c4 18 4 36 0 58M420 950c30 0 60 10 88 25M425 1005c28-5 58-15 85-28M648 950c-28 2-58 12-84 25M645 1008c-28-6-56-16-82-30M440 975c22 0 45 2 68 5M630 978c-22 0-45 2-66 5"/>
<path fill="none" stroke="#666" stroke-width="2.400" stroke-linecap="round" d="M405 1040c30 12 70 5 105-18 14 10 38 10 52 0 30 24 65 32 98 22"/>
<!-- body -->
<path fill="none" stroke="#f2f2f2" stroke-width="4.400" stroke-linecap="round" stroke-linejoin="round" d="M335,914C290,924 250,939 230,964c-45,60 -75,150 -90,250 -6,40 -4,70 5,105"/>
<path fill="none" stroke="#f2f2f2" stroke-width="4.400" stroke-linecap="round" stroke-linejoin="round" d="M150,1319l100 10c3 30 1 60-5 90l-90-10c-12-28-14-60-5-90z"/>
<path d="M154,1323l92 9c3 28 1 54-4 82l-84-9c-10-26-12-54-4-82z" fill="url(#hand)"/>
<path fill="none" stroke="#f2f2f2" stroke-width="4.400" stroke-linecap="round" stroke-linejoin="round" d="M245,1439c5 60-15 120-30 180-15 60-25 110-18 160 5 30 20 42 50 48 60 14 130 22 200 18 40-3 75-10 98-22"/>
<path fill="none" stroke="#f2f2f2" stroke-width="4.400" stroke-linecap="round" stroke-linejoin="round" d="M715,909c40 5 75 25 100 60 45 60 80 150 95 250 6 40 8 75 5 105"/>
<path fill="none" stroke="#f2f2f2" stroke-width="4.400" stroke-linecap="round" stroke-linejoin="round" d="M818,1307l95-12c6 30 8 60 2 85-20 25-50 35-82 38-10-35-15-75-15-111z"/>
<path d="M822,1311l88-11c5 28 6 54 1 78-18 22-44 30-72 33-10-32-15-68-17-100z" fill="url(#hand)"/>
<path fill="none" stroke="#f2f2f2" stroke-width="4.400" stroke-linecap="round" stroke-linejoin="round" d="M820,1439c5 50 25 110 40 165 18 65 32 120 30 170-2 35-15 50-45 58-60 15-130 22-200 15-40-4-75-12-100-23"/>
<path fill="none" stroke="#666" stroke-width="2.400" stroke-linecap="round" d="M285,939c-12 70-15 150-12 230 2 50 5 100 12 150"/>
<path fill="none" stroke="#666" stroke-width="2.400" stroke-linecap="round" d="M715,914c35 55 60 120 78 190 12 60 18 130 17 195"/>
<path fill="none" stroke="#666" stroke-width="2.400" stroke-linecap="round" d="M285,1309c30 60 70 100 120 135 45 30 95 50 140 65 50-15 95-38 135-68 50-38 90-82 112-135"/>
<path fill="none" stroke="#666" stroke-width="2.400" stroke-linecap="round" d="M545,1509v315M460,1574c30 10 60 25 85 48M548,1629c30-25 65-42 100-55 20-8 38-12 55-15M630,1689c20-35 50-60 85-78 35-16 75-25 115-28"/>
<path fill="none" stroke="#666" stroke-width="2.400" stroke-linecap="round" d="M860,1039c5 50 8 100 5 150"/>
<!-- leaders -->
<path fill="none" stroke="#f0f0f0" stroke-width="5" d="M-66,825L95,1004H380M630 1269H1140M-70 1754H165M925 492H1220"/>
</g>
</svg>
<span style="left:800.0px;top:503.9px;width:46.0px;height:55.2px;line-height:55.2px;text-align:center;font-family:'Liberation Sans','Noto Sans CJK SC',sans-serif;font-weight:100;font-size:46.0px;color:#dedede;transform:rotate(-12deg) skewX(-24deg) scaleX(0.872);">绅</span>
<span style="left:846.2px;top:503.7px;width:35.6px;height:42.7px;line-height:42.7px;text-align:center;font-family:'Liberation Sans','Noto Sans CJK SC',sans-serif;font-weight:100;font-size:35.6px;color:#dedede;transform:rotate(-14deg) skewX(-20deg) scaleX(0.627);">士</span>
<span style="left:805.0px;top:570.4px;width:46.0px;height:55.2px;line-height:55.2px;text-align:center;font-family:'Liberation Sans','Noto Sans CJK SC',sans-serif;font-weight:100;font-size:46.0px;color:#dedede;transform:rotate(-12deg) skewX(-24deg) scaleX(0.942);">领</span>
<span style="left:851.8px;top:554.3px;width:44.4px;height:53.3px;line-height:53.3px;text-align:center;font-family:'Liberation Sans','Noto Sans CJK SC',sans-serif;font-weight:100;font-size:44.4px;color:#dedede;transform:rotate(-14deg) skewX(-22deg) scaleX(0.811);">结</span>
<span style="left:1200.1px;top:435.2px;width:38.9px;height:46.7px;line-height:46.7px;text-align:center;font-family:'Liberation Sans','Noto Sans CJK SC',sans-serif;font-weight:100;font-size:38.9px;color:#dedede;transform:rotate(-6deg) skewX(-20deg) scaleX(0.871);">棕</span>
<span style="left:1230.5px;top:429.9px;width:46.0px;height:55.2px;line-height:55.2px;text-align:center;font-family:'Liberation Sans','Noto Sans CJK SC',sans-serif;font-weight:100;font-size:46.0px;color:#dedede;transform:rotate(-6deg) skewX(-14deg) scaleX(0.609);">熊</span>
<span style="left:1264.0px;top:441.8px;width:27.0px;height:32.4px;line-height:32.4px;text-align:center;font-family:'Liberation Sans','Noto Sans CJK SC',sans-serif;font-weight:100;font-size:27.0px;color:#dedede;transform:rotate(-6deg) skewX(-12deg) scaleX(0.550);">头</span>
<span style="left:1282.3px;top:433.8px;width:34.4px;height:41.3px;line-height:41.3px;text-align:center;font-family:'Liberation Sans','Noto Sans CJK SC',sans-serif;font-weight:100;font-size:34.4px;color:#dedede;transform:rotate(-8deg) skewX(-18deg) scaleX(0.757);">结</span>
<span style="left:1190.5px;top:482.8px;width:27.0px;height:32.4px;line-height:32.4px;text-align:center;font-family:'Liberation Sans','Noto Sans CJK SC',sans-serif;font-weight:100;font-size:27.0px;color:#dedede;transform:rotate(-4deg) skewX(-16deg) scaleX(0.971);">的</span>
<span style="left:1221.4px;top:481.2px;width:32.2px;height:38.7px;line-height:38.7px;text-align:center;font-family:'Liberation Sans','Noto Sans CJK SC',sans-serif;font-weight:100;font-size:32.2px;color:#dedede;transform:rotate(-6deg) skewX(-20deg) scaleX(0.939);">构</span>
<span style="left:1256.9px;top:479.2px;width:32.2px;height:38.7px;line-height:38.7px;text-align:center;font-family:'Liberation Sans','Noto Sans CJK SC',sans-serif;font-weight:100;font-size:32.2px;color:#dedede;transform:rotate(-8deg) skewX(-20deg) scaleX(0.905);">思</span>
<span style="left:1180.3px;top:621.8px;width:34.4px;height:41.3px;line-height:41.3px;text-align:center;font-family:'Liberation Sans','Noto Sans CJK SC',sans-serif;font-weight:100;font-size:34.4px;color:#dedede;transform:rotate(-6deg) skewX(-18deg) scaleX(0.694);">大</span>
<span style="left:1210.0px;top:613.9px;width:46.0px;height:55.2px;line-height:55.2px;text-align:center;font-family:'Liberation Sans','Noto Sans CJK SC',sans-serif;font-weight:100;font-size:46.0px;color:#dedede;transform:rotate(-6deg) skewX(-14deg) scaleX(0.852);">肚</span>
<span style="left:1250.9px;top:619.8px;width:41.1px;height:49.3px;line-height:49.3px;text-align:center;font-family:'Liberation Sans','Noto Sans CJK SC',sans-serif;font-weight:100;font-size:41.1px;color:#dedede;transform:rotate(-4deg) skewX(-10deg) scaleX(0.550);">子</span>
<span style="left:1174.0px;top:672.9px;width:46.0px;height:55.2px;line-height:55.2px;text-align:center;font-family:'Liberation Sans','Noto Sans CJK SC',sans-serif;font-weight:100;font-size:46.0px;color:#dedede;transform:rotate(-4deg) skewX(-16deg) scaleX(0.570);">空</span>
<span style="left:1214.5px;top:676.4px;width:46.0px;height:55.2px;line-height:55.2px;text-align:center;font-family:'Liberation Sans','Noto Sans CJK SC',sans-serif;font-weight:100;font-size:46.0px;color:#dedede;transform:rotate(-4deg) skewX(-10deg) scaleX(0.618);">间</span>
<span style="left:1244.5px;top:680.0px;width:40.0px;height:48.0px;line-height:48.0px;text-align:center;font-family:'Liberation Sans','Noto Sans CJK SC',sans-serif;font-weight:100;font-size:40.0px;color:#dedede;transform:rotate(-6deg) skewX(-16deg) scaleX(0.550);">更</span>
<span style="left:1281.3px;top:683.8px;width:34.4px;height:41.3px;line-height:41.3px;text-align:center;font-family:'Liberation Sans','Noto Sans CJK SC',sans-serif;font-weight:100;font-size:34.4px;color:#dedede;transform:rotate(-6deg) skewX(-18deg) scaleX(0.694);">大</span>
<span style="left:776.1px;top:714.2px;width:38.9px;height:46.7px;line-height:46.7px;text-align:center;font-family:'Liberation Sans','Noto Sans CJK SC',sans-serif;font-weight:100;font-size:38.9px;color:#dedede;transform:rotate(-10deg) skewX(-20deg) scaleX(0.760);">大</span>
<span style="left:820.5px;top:710.9px;width:46.0px;height:55.2px;line-height:55.2px;text-align:center;font-family:'Liberation Sans','Noto Sans CJK SC',sans-serif;font-weight:100;font-size:46.0px;color:#dedede;transform:rotate(-8deg) skewX(-18deg) scaleX(1.083);">脚</span>
<span style="left:786.3px;top:771.5px;width:43.3px;height:52.0px;line-height:52.0px;text-align:center;font-family:'Liberation Sans','Noto Sans CJK SC',sans-serif;font-weight:100;font-size:43.3px;color:#dedede;transform:rotate(-8deg) skewX(-24deg) scaleX(0.722);">站</span>
<span style="left:818.4px;top:772.8px;width:41.1px;height:49.3px;line-height:49.3px;text-align:center;font-family:'Liberation Sans','Noto Sans CJK SC',sans-serif;font-weight:100;font-size:41.1px;color:#dedede;transform:rotate(-8deg) skewX(-20deg) scaleX(0.550);">的</span>
<span style="left:845.9px;top:769.8px;width:41.1px;height:49.3px;line-height:49.3px;text-align:center;font-family:'Liberation Sans','Noto Sans CJK SC',sans-serif;font-weight:100;font-size:41.1px;color:#dedede;transform:rotate(-8deg) skewX(-18deg) scaleX(0.619);">更</span>
<span style="left:880.5px;top:763.4px;width:46.0px;height:55.2px;line-height:55.2px;text-align:center;font-family:'Liberation Sans','Noto Sans CJK SC',sans-serif;font-weight:100;font-size:46.0px;color:#dedede;transform:rotate(-8deg) skewX(-20deg) scaleX(0.939);">稳</span>
<div style="left:1566px;top:76px;width:12px;height:959px;background:#4a4a4a;"></div>
<svg style="left:1568.5px;top:80px;" width="8" height="6" viewBox="0 0 8 6"><path d="M1 5l3-3 3 3" stroke="#6c6c6c" stroke-width="1" fill="none"/></svg>
<div style="left:1567.5px;top:364px;width:9px;height:380px;background:#6a6a6a;"></div>
<svg style="left:1568px;top:1024px;" width="8" height="6" viewBox="0 0 8 6"><path d="M1 1l3 3 3-3" stroke="#6c6c6c" stroke-width="1" fill="none"/></svg>
<div style="left:1578px;top:54px;width:2px;height:995px;background:#3a3a3a;"></div>
<div style="left:30px;top:1034.5px;width:1548px;height:11.5px;background:#4d4d4d;"></div>
<div style="left:30px;top:1034.5px;width:36px;height:11.5px;background:#444444;"></div>
<span style="left:36.7px;top:1032.8px;height:16px;line-height:16px;color:#f0f0f0;font-size:9px;">100%</span>
<div style="left:66px;top:1034.5px;width:138px;height:11.5px;background:#535353;"></div>
<span style="left:118px;top:1032.8px;height:16px;line-height:16px;color:#c8c8c8;font-size:8px;">D3D12</span>
<svg style="left:195px;top:1037px;" width="5" height="8" viewBox="0 0 5 8"><path d="M1 0.500l2.500 3.500L1 7.500" stroke="#9a9a9a" stroke-width="1" fill="none"/></svg>
<svg style="left:209px;top:1038px;" width="5" height="7" viewBox="0 0 5 7"><path d="M3.500 0.500L1 3.500l2.500 3" stroke="#6c6c6c" stroke-width="1" fill="none"/></svg>
<svg style="left:1556px;top:1038px;" width="5" height="7" viewBox="0 0 5 7"><path d="M1 0.500L3.500 3.500 1 6.500" stroke="#6c6c6c" stroke-width="1" fill="none"/></svg>
<div style="left:597px;top:1035.5px;width:530px;height:9.5px;background:#6a6a6a;"></div>
<div style="left:0px;top:1046px;width:1920px;height:3px;background:#2b2b2b;"></div>
<div style="left:0px;top:63px;width:28px;height:986px;background:#535353;"></div>
<div style="left:6px;top:66.500px;width:10px;height:1px;background:repeating-linear-gradient(90deg,#3e3e3e 0 1px,transparent 1px 2px);"></div>
<div style="left:6px;top:68.500px;width:10px;height:1px;background:repeating-linear-gradient(90deg,#3e3e3e 0 1px,transparent 1px 2px);"></div>
<svg style="left:5.699999999999999px;top:78.3px;" width="14" height="14" viewBox="0 0 14 14"><g transform="translate(1.300 1.300) scale(0.815)"><path d="M7 1v12M1 7h12" stroke="#e2e2e2" stroke-width="1.300"/><path d="M7 0l2 2.500H5zM7 14l2-2.500H5zM0 7l2.500-2v4zM14 7l-2.500-2v4z" fill="#e2e2e2"/></g></svg>
<svg style="left:20.5px;top:88.8px;" width="3" height="3" viewBox="0 0 3 3"><path d="M3 0.200v2.800H0.200z" fill="#c4c4c4"/></svg>
<svg style="left:5.699999999999999px;top:97.3px;" width="14" height="14" viewBox="0 0 14 14"><rect x="1.500" y="2" width="11" height="10" fill="none" stroke="#e2e2e2" stroke-width="1.200" stroke-dasharray="2.200 1.400"/></svg>
<svg style="left:20.5px;top:107.8px;" width="3" height="3" viewBox="0 0 3 3"><path d="M3 0.200v2.800H0.200z" fill="#c4c4c4"/></svg>
<svg style="left:5.699999999999999px;top:117px;" width="14" height="14" viewBox="0 0 14 14"><circle cx="5.500" cy="8" r="4.200" fill="none" stroke="#e2e2e2" stroke-width="1" stroke-dasharray="1.500 1"/><circle cx="9" cy="10.500" r="2.500" fill="none" stroke="#e2e2e2" stroke-width="0.900" stroke-dasharray="1.300 1"/><path d="M12.500 1.500L6.500 8.500" stroke="#e2e2e2" stroke-width="1.800" stroke-linecap="round"/><ellipse cx="5.500" cy="9.800" rx="1.800" ry="1.400" fill="#e2e2e2" transform="rotate(-45 5.500 9.800)"/></svg>
<svg style="left:20.5px;top:127.5px;" width="3" height="3" viewBox="0 0 3 3"><path d="M3 0.200v2.800H0.200z" fill="#c4c4c4"/></svg>
<svg style="left:5.699999999999999px;top:137.7px;" width="14" height="14" viewBox="0 0 14 14"><rect x="1.500" y="1.500" width="9.500" height="9.500" fill="none" stroke="#e2e2e2" stroke-width="0.900" stroke-dasharray="1.200 1"/><rect x="3.500" y="3.500" width="5" height="5" fill="#e2e2e2"/><path d="M8 7.500l5.500 3.800-2.500 0.400-1 2.300z" fill="#e2e2e2" stroke="#535353" stroke-width="0.500"/></svg>
<svg style="left:20.5px;top:148.2px;" width="3" height="3" viewBox="0 0 3 3"><path d="M3 0.200v2.800H0.200z" fill="#c4c4c4"/></svg>
<svg style="left:5.699999999999999px;top:156.3px;" width="14" height="14" viewBox="0 0 14 14"><path d="M3.500 0.500v10h10M0.500 3.500h10v10" stroke="#e2e2e2" stroke-width="1.250" fill="none"/></svg>
<svg style="left:20.5px;top:166.8px;" width="3" height="3" viewBox="0 0 3 3"><path d="M3 0.200v2.800H0.200z" fill="#c4c4c4"/></svg>
<svg style="left:5.699999999999999px;top:175.4px;" width="14" height="14" viewBox="0 0 14 14"><rect x="1.500" y="2" width="11" height="10" fill="none" stroke="#e2e2e2" stroke-width="1.200"/><path d="M1.500 2l11 10M12.500 2l-11 10" stroke="#e2e2e2" stroke-width="1"/></svg>
<svg style="left:5.699999999999999px;top:196.2px;" width="14" height="14" viewBox="0 0 14 14"><path d="M2 12l0.500-2L8 4.500l1.500 1.500L4 11.500z" fill="none" stroke="#e2e2e2" stroke-width="1"/><path d="M7.500 3l3.500 3.500M9 4.500l2-2.500a1.500 1.500 0 0 1 2 2l-2.500 2z" stroke="#e2e2e2" stroke-width="1.400" fill="#e2e2e2"/></svg>
<svg style="left:20.5px;top:206.7px;" width="3" height="3" viewBox="0 0 3 3"><path d="M3 0.200v2.800H0.200z" fill="#c4c4c4"/></svg>
<svg style="left:5.699999999999999px;top:215.6px;" width="14" height="14" viewBox="0 0 14 14"><rect x="1" y="5.500" width="12.500" height="5" rx="2.500" fill="#e2e2e2" transform="rotate(-40 7 8)"/><circle cx="7" cy="8" r="1" fill="#535353"/><path d="M3 1v3M1.500 2.500h3" stroke="#e2e2e2" stroke-width="0.900"/></svg>
<svg style="left:20.5px;top:226.1px;" width="3" height="3" viewBox="0 0 3 3"><path d="M3 0.200v2.800H0.200z" fill="#c4c4c4"/></svg>
<svg style="left:5.699999999999999px;top:234px;" width="14" height="14" viewBox="0 0 14 14"><path d="M12.500 1L6 8.500" stroke="#e2e2e2" stroke-width="1.800" stroke-linecap="round"/><path d="M5.800 8.200c-2 0-2.500 2-4.300 4 2.500 0.800 5.500-0.500 5.800-2.500z" fill="#e2e2e2"/></svg>
<svg style="left:20.5px;top:244.5px;" width="3" height="3" viewBox="0 0 3 3"><path d="M3 0.200v2.800H0.200z" fill="#c4c4c4"/></svg>
<svg style="left:5.699999999999999px;top:254px;" width="14" height="14" viewBox="0 0 14 14"><circle cx="7" cy="3.500" r="2.500" fill="#e2e2e2"/><path d="M6 5h2l0.500 3.500H12v2.500H2V8.500h3.500z" fill="#e2e2e2"/><path d="M2 12.500h10" stroke="#e2e2e2" stroke-width="1"/></svg>
<svg style="left:20.5px;top:264.5px;" width="3" height="3" viewBox="0 0 3 3"><path d="M3 0.200v2.800H0.200z" fill="#c4c4c4"/></svg>
<svg style="left:5.699999999999999px;top:273.3px;" width="14" height="14" viewBox="0 0 14 14"><path d="M12.500 1.500L7 8.500" stroke="#e2e2e2" stroke-width="1.700" stroke-linecap="round"/><path d="M6.800 8.200c-2 0-2.300 2-3.800 3.800 2.300 0.600 5-0.500 5.300-2.400z" fill="#e2e2e2"/><path d="M1 4.500c1-2 3-2.800 5-2" stroke="#e2e2e2" stroke-width="1" fill="none"/><path d="M0.500 2.500l0.500 3 2.500-1z" fill="#e2e2e2"/></svg>
<svg style="left:20.5px;top:283.8px;" width="3" height="3" viewBox="0 0 3 3"><path d="M3 0.200v2.800H0.200z" fill="#c4c4c4"/></svg>
<svg style="left:5.699999999999999px;top:293px;" width="14" height="14" viewBox="0 0 14 14"><path d="M1.500 9.500L8 3l4 3.500-5 5.500H4z" fill="#e2e2e2"/><path d="M1.500 9.500l2.700 2.500h2.600l1.500-1.700-3.800-3.500z" fill="#535353" stroke="#e2e2e2" stroke-width="0.800"/><path d="M4 12.500h9" stroke="#e2e2e2" stroke-width="0.900"/></svg>
<svg style="left:20.5px;top:303.5px;" width="3" height="3" viewBox="0 0 3 3"><path d="M3 0.200v2.800H0.200z" fill="#c4c4c4"/></svg>
<div style="left:7px;top:313px;width:12px;height:11px;border:1px solid #e2e2e2;background:linear-gradient(135deg,#2e2e2e,#c8c8c8);"></div>
<svg style="left:20.5px;top:322.5px;" width="3" height="3" viewBox="0 0 3 3"><path d="M3 0v3H0z" fill="#c8c8c8"/></svg>
<svg style="left:5.699999999999999px;top:331.7px;" width="14" height="14" viewBox="0 0 14 14"><path d="M4 2.500c2-1.500 6-1.500 7.500 0 1 1.500 0.500 4-1 5l-2 1-1.500-1.500-3.500 5.500-1.500-0.500 3-6.500c-1.500-1-2-2-1-3z" fill="#e2e2e2"/></svg>
<svg style="left:20.5px;top:342.2px;" width="3" height="3" viewBox="0 0 3 3"><path d="M3 0.200v2.800H0.200z" fill="#c4c4c4"/></svg>
<svg style="left:5.699999999999999px;top:351.6px;" width="14" height="14" viewBox="0 0 14 14"><path d="M9.500 0.500L4.500 7.500" stroke="#e2e2e2" stroke-width="1.700" stroke-linecap="round"/><path d="M4.300 7.300c-1.800 0-2 1.800-3.500 3.500 2.300 0.600 4.700-0.500 5-2.200z" fill="#e2e2e2"/><circle cx="10.300" cy="10" r="2.600" fill="none" stroke="#e2e2e2" stroke-width="1.300"/></svg>
<svg style="left:20.5px;top:362.1px;" width="3" height="3" viewBox="0 0 3 3"><path d="M3 0.200v2.800H0.200z" fill="#c4c4c4"/></svg>
<svg style="left:5.699999999999999px;top:370.7px;" width="14" height="14" viewBox="0 0 14 14"><circle cx="8.500" cy="5" r="4" fill="#e2e2e2"/><path d="M6 8l-5 5.500" stroke="#e2e2e2" stroke-width="1.500" stroke-linecap="round"/></svg>
<svg style="left:20.5px;top:381.2px;" width="3" height="3" viewBox="0 0 3 3"><path d="M3 0.200v2.800H0.200z" fill="#c4c4c4"/></svg>
<svg style="left:5.699999999999999px;top:391.6px;" width="14" height="14" viewBox="0 0 14 14"><path d="M1.500 12.500l1-5.500 5-3.500 3.500 3.500-3.500 5z" fill="none" stroke="#e2e2e2" stroke-width="1.100"/><path d="M7.500 3l2-2 3.500 3.500-2 2z" fill="#e2e2e2"/><circle cx="6" cy="8" r="1" fill="#e2e2e2"/><path d="M1.500 12.500L5.500 8.500" stroke="#e2e2e2" stroke-width="0.800"/></svg>
<svg style="left:20.5px;top:402.1px;" width="3" height="3" viewBox="0 0 3 3"><path d="M3 0.200v2.800H0.200z" fill="#c4c4c4"/></svg>
<span style="left:5.700px;top:408px;width:14px;height:18px;line-height:18px;text-align:center;font-family:'Liberation Serif',serif;font-size:17px;color:#e2e2e2;">T</span>
<svg style="left:20.5px;top:420.5px;" width="3" height="3" viewBox="0 0 3 3"><path d="M3 0v3H0z" fill="#c8c8c8"/></svg>
<svg style="left:5.699999999999999px;top:429.3px;" width="14" height="14" viewBox="0 0 14 14"><path d="M3.500 0.500v11.500l2.800-2.500 2 4 1.700-0.800-2-4h3.800z" fill="#e2e2e2"/></svg>
<svg style="left:20.5px;top:439.8px;" width="3" height="3" viewBox="0 0 3 3"><path d="M3 0.200v2.800H0.200z" fill="#c4c4c4"/></svg>
<div style="left:7px;top:449px;width:12px;height:10px;border:1px solid #e2e2e2;background:#6e6e6e;"></div>
<svg style="left:20.5px;top:458.5px;" width="3" height="3" viewBox="0 0 3 3"><path d="M3 0v3H0z" fill="#c8c8c8"/></svg>
<svg style="left:5.699999999999999px;top:468px;" width="14" height="14" viewBox="0 0 14 14"><path d="M3.500 13c-1-1.500-2.800-3.500-3-5 0.800-0.800 1.800 0 2.500 1V3c0-1 1.500-1 1.500 0V1.800c0-1 1.600-1 1.600 0V3 2.200c0-1 1.600-1 1.600 0V3.800c0-1 1.500-1 1.500 0V9.500c0 1.500-0.800 2.500-1.200 3.500z" fill="#e2e2e2"/></svg>
<svg style="left:20.5px;top:478.5px;" width="3" height="3" viewBox="0 0 3 3"><path d="M3 0.200v2.800H0.200z" fill="#c4c4c4"/></svg>
<div style="left:2.3px;top:486.7px;width:22.5px;height:17px;background:#383838;"></div>
<svg style="left:6px;top:488.5px;" width="14" height="14" viewBox="0 0 14 14"><circle cx="5.500" cy="5.500" r="4" stroke="#f0f0f0" stroke-width="1.200" fill="none"/><path d="M8.600 8.600l4 4.200" stroke="#f0f0f0" stroke-width="1.600" stroke-linecap="round"/></svg>
<svg style="left:6px;top:511px;" width="14" height="5" viewBox="0 0 14 5"><circle cx="2" cy="2.500" r="1.300" fill="#e2e2e2"/><circle cx="7" cy="2.500" r="1.300" fill="#e2e2e2"/><circle cx="12" cy="2.500" r="1.300" fill="#e2e2e2"/></svg>
<svg style="left:20.5px;top:518.5px;" width="3" height="3" viewBox="0 0 3 3"><path d="M3 0v3H0z" fill="#c8c8c8"/></svg>
<div style="left:5px;top:531px;width:6px;height:6px;background:#fff;border:1px solid #ddd;"></div>
<div style="left:2px;top:528px;width:6px;height:6px;background:#000;border:1px solid #ddd;"></div>
<svg style="left:15.5px;top:527.5px;" width="9" height="9" viewBox="0 0 9 9"><path d="M2 3.500h3.500a2 2 0 0 1 2 2V7" stroke="#e2e2e2" stroke-width="1.300" fill="none"/><path d="M0 3.500l2.800-2.500v5zM7.500 9l-2.500-2.800h5z" fill="#e2e2e2"/></svg>
<div style="left:10.200px;top:548.300px;width:14px;height:13.500px;background:#000;border:1px solid #e8e8e8;"></div>
<div style="left:2.700px;top:541px;width:14px;height:13.500px;background:#fff;border:0.500px solid #535353;"></div>
<svg style="left:6px;top:570.5px;" width="13.5" height="10" viewBox="0 0 13.5 10"><rect x="0.600" y="0.600" width="12.300" height="8.800" fill="none" stroke="#e2e2e2" stroke-width="1"/><circle cx="6.700" cy="5" r="2.600" fill="none" stroke="#e2e2e2" stroke-width="0.800" stroke-dasharray="1.200 0.800"/></svg>
<svg style="left:6px;top:590.5px;" width="14" height="10" viewBox="0 0 14 10"><rect x="0.600" y="3" width="8" height="6" fill="none" stroke="#e2e2e2" stroke-width="1"/><rect x="4" y="0.600" width="9" height="6" fill="#535353" stroke="#e2e2e2" stroke-width="1"/></svg>
<svg style="left:20.5px;top:598.5px;" width="3" height="3" viewBox="0 0 3 3"><path d="M3 0v3H0z" fill="#c8c8c8"/></svg>
<svg style="left:6.5px;top:611px;" width="14" height="13" viewBox="0 0 14 13"><path d="M2 6a3.500 3.500 0 0 1 6-2" stroke="#e2e2e2" stroke-width="1.100" fill="none"/><path d="M1 3l0.500 3.500 3-1z" fill="#e2e2e2"/><rect x="6" y="7" width="7" height="5.500" fill="none" stroke="#e2e2e2" stroke-width="1"/><path d="M11 0.500v3M9.500 2h3" stroke="#e2e2e2" stroke-width="0.900"/><path d="M7 12l2-2.500 1.500 1.500 1-1 1.500 2z" fill="#e2e2e2"/></svg>
<div style="left:1580px;top:54px;width:120px;height:9.5px;background:#424242;"></div>
<svg style="left:1690px;top:55.5px;" width="8" height="6" viewBox="0 0 8 6"><path d="M3 0.800L1 2.800l2 2M6.500 0.800l-2 2 2 2" stroke="#c8c8c8" stroke-width="0.900" fill="none"/></svg>
<div style="left:1580px;top:63.5px;width:120px;height:985px;background:#535353;"></div>
<div style="left:1700px;top:54px;width:2px;height:995px;background:#3a3a3a;"></div>
<div style="left:1580px;top:93px;width:120px;height:1.2px;background:#3c3c3c;"></div>
<div style="left:1580px;top:145.3px;width:120px;height:1.2px;background:#3c3c3c;"></div>
<div style="left:1580px;top:175.6px;width:120px;height:1.2px;background:#3c3c3c;"></div>
<div style="left:1580px;top:206px;width:120px;height:1.2px;background:#3c3c3c;"></div>
<div style="left:1580px;top:258.5px;width:120px;height:1.2px;background:#3c3c3c;"></div>
<div style="left:1580px;top:289.4px;width:120px;height:1.2px;background:#3c3c3c;"></div>
<div style="left:1580px;top:319.8px;width:120px;height:1.2px;background:#3c3c3c;"></div>
<div style="left:1580px;top:350.5px;width:120px;height:1.2px;background:#3c3c3c;"></div>
<div style="left:1580px;top:381px;width:120px;height:1.2px;background:#3c3c3c;"></div>
<div style="left:1580px;top:412px;width:120px;height:1.2px;background:#3c3c3c;"></div>
<div style="left:1580px;top:442.5px;width:120px;height:1.2px;background:#3c3c3c;"></div>
<div style="left:1632.500px;top:65.8px;width:14.500px;height:1px;background:repeating-linear-gradient(90deg,#464646 0 1.500px,transparent 1.500px 3px);"></div>
<div style="left:1632.500px;top:67.8px;width:14.500px;height:1px;background:repeating-linear-gradient(90deg,#464646 0 1.500px,transparent 1.500px 3px);"></div>
<div style="left:1632.500px;top:96.3px;width:14.500px;height:1px;background:repeating-linear-gradient(90deg,#464646 0 1.500px,transparent 1.500px 3px);"></div>
<div style="left:1632.500px;top:98.3px;width:14.500px;height:1px;background:repeating-linear-gradient(90deg,#464646 0 1.500px,transparent 1.500px 3px);"></div>
<div style="left:1632.500px;top:148.60000000000002px;width:14.500px;height:1px;background:repeating-linear-gradient(90deg,#464646 0 1.500px,transparent 1.500px 3px);"></div>
<div style="left:1632.500px;top:150.60000000000002px;width:14.500px;height:1px;background:repeating-linear-gradient(90deg,#464646 0 1.500px,transparent 1.500px 3px);"></div>
<div style="left:1632.500px;top:178.9px;width:14.500px;height:1px;background:repeating-linear-gradient(90deg,#464646 0 1.500px,transparent 1.500px 3px);"></div>
<div style="left:1632.500px;top:180.9px;width:14.500px;height:1px;background:repeating-linear-gradient(90deg,#464646 0 1.500px,transparent 1.500px 3px);"></div>
<div style="left:1632.500px;top:209.3px;width:14.500px;height:1px;background:repeating-linear-gradient(90deg,#464646 0 1.500px,transparent 1.500px 3px);"></div>
<div style="left:1632.500px;top:211.3px;width:14.500px;height:1px;background:repeating-linear-gradient(90deg,#464646 0 1.500px,transparent 1.500px 3px);"></div>
<div style="left:1632.500px;top:261.8px;width:14.500px;height:1px;background:repeating-linear-gradient(90deg,#464646 0 1.500px,transparent 1.500px 3px);"></div>
<div style="left:1632.500px;top:263.8px;width:14.500px;height:1px;background:repeating-linear-gradient(90deg,#464646 0 1.500px,transparent 1.500px 3px);"></div>
<div style="left:1632.500px;top:292.7px;width:14.500px;height:1px;background:repeating-linear-gradient(90deg,#464646 0 1.500px,transparent 1.500px 3px);"></div>
<div style="left:1632.500px;top:294.7px;width:14.500px;height:1px;background:repeating-linear-gradient(90deg,#464646 0 1.500px,transparent 1.500px 3px);"></div>
<div style="left:1632.500px;top:323.1px;width:14.500px;height:1px;background:repeating-linear-gradient(90deg,#464646 0 1.500px,transparent 1.500px 3px);"></div>
<div style="left:1632.500px;top:325.1px;width:14.500px;height:1px;background:repeating-linear-gradient(90deg,#464646 0 1.500px,transparent 1.500px 3px);"></div>
<div style="left:1632.500px;top:353.8px;width:14.500px;height:1px;background:repeating-linear-gradient(90deg,#464646 0 1.500px,transparent 1.500px 3px);"></div>
<div style="left:1632.500px;top:355.8px;width:14.500px;height:1px;background:repeating-linear-gradient(90deg,#464646 0 1.500px,transparent 1.500px 3px);"></div>
<div style="left:1632.500px;top:384.3px;width:14.500px;height:1px;background:repeating-linear-gradient(90deg,#464646 0 1.500px,transparent 1.500px 3px);"></div>
<div style="left:1632.500px;top:386.3px;width:14.500px;height:1px;background:repeating-linear-gradient(90deg,#464646 0 1.500px,transparent 1.500px 3px);"></div>
<div style="left:1632.500px;top:415.3px;width:14.500px;height:1px;background:repeating-linear-gradient(90deg,#464646 0 1.500px,transparent 1.500px 3px);"></div>
<div style="left:1632.500px;top:417.3px;width:14.500px;height:1px;background:repeating-linear-gradient(90deg,#464646 0 1.500px,transparent 1.500px 3px);"></div>
<span style="left:1607.7px;top:72.3px;height:16px;line-height:16px;color:#e6e6e6;font-size:8.6px;">直方图</span>
<span style="left:1607.7px;top:103.2px;height:16px;line-height:16px;color:#e6e6e6;font-size:8.6px;">历史记录</span>
<span style="left:1607.7px;top:124.2px;height:16px;line-height:16px;color:#e6e6e6;font-size:8.6px;">信息</span>
<span style="left:1607.7px;top:154.7px;height:16px;line-height:16px;color:#e6e6e6;font-size:8.6px;">画笔设置</span>
<span style="left:1607.7px;top:185.7px;height:16px;line-height:16px;color:#e6e6e6;font-size:8.6px;">样式</span>
<span style="left:1607.7px;top:216.4px;height:16px;line-height:16px;color:#e6e6e6;font-size:8.6px;">动作</span>
<span style="left:1607.7px;top:237.4px;height:16px;line-height:16px;color:#e6e6e6;font-size:8.6px;">字符</span>
<span style="left:1607.7px;top:268.8px;height:16px;line-height:16px;color:#e6e6e6;font-size:8.6px;">图牛助理2</span>
<span style="left:1607.7px;top:300.8px;height:16px;line-height:16px;color:#e6e6e6;font-size:8.7px;letter-spacing:-0.120px;">Design Mirror</span>
<span style="left:1607.7px;top:331.5px;height:16px;line-height:16px;color:#e6e6e6;font-size:8.7px;letter-spacing:-0.120px;">Specs</span>
<span style="left:1607.7px;top:361.9px;height:16px;line-height:16px;color:#e6e6e6;font-size:8.7px;letter-spacing:-0.120px;">TK7 RapidMask</span>
<span style="left:1607.7px;top:392.9px;height:16px;line-height:16px;color:#e6e6e6;font-size:8.7px;letter-spacing:-0.120px;">TK7 Combo</span>
<span style="left:1607.7px;top:423.9px;height:16px;line-height:16px;color:#e6e6e6;font-size:8.7px;letter-spacing:-0.120px;">Connect SD or Comf...</span>
<svg style="left:1584.4px;top:70.5px;" width="18" height="18" viewBox="0 0 18 18"><path d="M2.500 13.500V8.500L3.500 7l0.700 3 1.300-4 0.800 3.500 1.200-4.300 1 3.800 0.800-3.200 1 3.700 1.200-3.500 1 3.500 1-4 0.800 4 1.200-2.500 1.100 2V13.500z" fill="#e4e4e4"/></svg>
<svg style="left:1584.4px;top:101.5px;" width="18" height="18" viewBox="0 0 18 18"><rect x="3.500" y="2" width="3" height="3" fill="none" stroke="#e4e4e4" stroke-width="0.900"/><rect x="3.500" y="6.500" width="3" height="3" fill="none" stroke="#e4e4e4" stroke-width="0.900"/><rect x="3" y="11" width="4" height="4" fill="#e4e4e4"/><path d="M11 4c3 1 3.500 6 0 8.500" stroke="#e4e4e4" stroke-width="1.300" fill="none"/><path d="M9 4.500l3.500-2 0 3.500z" fill="#e4e4e4"/></svg>
<svg style="left:1584.4px;top:123.0px;" width="18" height="18" viewBox="0 0 18 18"><circle cx="9" cy="9" r="5.800" fill="none" stroke="#e4e4e4" stroke-width="1.100"/><path d="M9 8v4" stroke="#e4e4e4" stroke-width="1.400"/><circle cx="9" cy="6" r="0.900" fill="#e4e4e4"/></svg>
<svg style="left:1584.4px;top:153.5px;" width="18" height="18" viewBox="0 0 18 18"><path d="M16 4L10 10.500" stroke="#e4e4e4" stroke-width="2.600" stroke-linecap="round"/><path d="M9.800 9.800c-2.600-0.400-3.200 2.200-5.300 4 3 1 6.500-0.200 7-2.400z" fill="#e4e4e4"/><path d="M2 3h1M4 3h3M2 5.500h1M4 5.500h3M2 8h1M4 8h3" stroke="#e4e4e4" stroke-width="1"/></svg>
<div style="left:1589px;top:187px;width:11px;height:9px;background:#6e6e6e;"></div>
<span style="left:1586.500px;top:187px;height:16px;line-height:16px;font-size:11.500px;font-style:italic;font-weight:bold;font-family:'Liberation Serif',serif;color:#e4e4e4;">fx</span>
<svg style="left:1584.4px;top:215.4px;" width="18" height="18" viewBox="0 0 18 18"><path d="M4.500 4l10 5-10 5z" fill="#e4e4e4"/></svg>
<span style="left:1588px;top:237px;height:16px;line-height:16px;font-size:13px;color:#e4e4e4;">A</span>
<div style="left:1598px;top:239px;width:1px;height:13px;background:#e4e4e4;"></div>
<svg style="left:1583.4px;top:267.0px;" width="20" height="20" viewBox="0 0 20 20"><circle cx="10" cy="11" r="5" fill="none" stroke="#e4e4e4" stroke-width="2.600"/><path d="M6.200 7.200C3.800 7 2.300 5.500 2.300 3.200c1.600 1.300 3.400 1.700 5.400 1.800zM13.800 7.200c2.400-0.200 3.900-1.700 3.900-4-1.600 1.300-3.400 1.700-5.400 1.800z" fill="#e4e4e4"/><path d="M5.600 15.800l-1 1.200M14.400 15.800l1 1.200" stroke="#e4e4e4" stroke-width="1.300"/></svg>
<svg style="left:1584.4px;top:298.5px;" width="18" height="18" viewBox="0 0 18 18"><path d="M3 3l6 3 6-3v12l-6-3-6 3z" fill="none" stroke="#e4e4e4" stroke-width="1.300"/></svg>
<svg style="left:1584.4px;top:329.5px;" width="18" height="18" viewBox="0 0 18 18"><path d="M4.500 13.500L13.500 4.500" stroke="#e4e4e4" stroke-width="2.800"/><path d="M16 2v7l-7-7zM2 16v-7l7 7z" fill="#e4e4e4"/></svg>
<div style="left:1584.500px;top:360px;width:18px;height:18px;border-radius:9px;background:#2f7d46;border:1px solid #9fc8a8;"></div>
<span style="left:1584.500px;top:360px;width:18px;height:18px;line-height:18px;text-align:center;font-size:8.600px;font-style:italic;font-weight:bold;color:#fff;letter-spacing:-0.500px;">TK7</span>
<div style="left:1584.500px;top:391px;width:18px;height:18px;border-radius:9px;background:linear-gradient(#b87a32 0 50%,#3c78b4 50% 100%);border:1px solid #b8b8b8;"></div>
<span style="left:1584.500px;top:391px;width:18px;height:18px;line-height:18px;text-align:center;font-size:8.600px;font-style:italic;font-weight:bold;color:#fff;letter-spacing:-0.500px;">TK7</span>
<svg style="left:1584.4px;top:421.5px;" width="18" height="18" viewBox="0 0 18 18"><path d="M2 3h4l1 1.500h3L11 3h5v13H2z" fill="none" stroke="#8a8a8a" stroke-width="0.900"/></svg>
<span style="left:1588px;top:426px;height:8px;line-height:8px;font-size:4.500px;color:#b0b0b0;">UXP</span>
<div style="left:1702px;top:54px;width:218px;height:9.5px;background:#424242;"></div>
<svg style="left:1911px;top:55.5px;" width="8" height="6" viewBox="0 0 8 6"><path d="M1 0.800l2 2-2 2M4.500 0.800l2 2-2 2" stroke="#c8c8c8" stroke-width="0.900" fill="none"/></svg>
<div style="left:1702px;top:63.5px;width:218px;height:20px;background:#424242;"></div>
<div style="left:1732px;top:63.5px;width:29.5px;height:20.5px;background:#535353;"></div>
<div style="left:1731.5px;top:64px;width:1px;height:19px;background:#3a3a3a;"></div>
<div style="left:1761.5px;top:64px;width:1px;height:19px;background:#3a3a3a;"></div>
<div style="left:1790.5px;top:64px;width:1px;height:19px;background:#3a3a3a;"></div>
<div style="left:1820.5px;top:64px;width:1px;height:19px;background:#3a3a3a;"></div>
<span style="left:1709px;top:64.0px;height:16px;line-height:16px;color:#a8a8a8;font-size:8.6px;">颜色</span>
<span style="left:1738.5px;top:64.0px;height:16px;line-height:16px;color:#f0f0f0;font-size:8.6px;">色板</span>
<span style="left:1767.8px;top:64.0px;height:16px;line-height:16px;color:#a8a8a8;font-size:8.6px;">渐变</span>
<span style="left:1798px;top:64.0px;height:16px;line-height:16px;color:#a8a8a8;font-size:8.6px;">图案</span>
<svg style="left:1911.5px;top:70px;" width="8" height="7" viewBox="0 0 8 7"><path d="M0 1h8M0 3.500h8M0 6h8" stroke="#c8c8c8" stroke-width="1.200"/></svg>
<svg style="left:1707px;top:94px;" width="10" height="10" viewBox="0 0 10 10"><circle cx="4" cy="4" r="2.900" stroke="#e6e6e6" stroke-width="1.300" fill="none"/><path d="M6.200 6.200l2.800 2.800" stroke="#e6e6e6" stroke-width="1.600" stroke-linecap="round"/></svg>
<div style="left:1719px;top:92.400px;width:197px;height:14.500px;background:#4a4a4a;border:1px solid #424242;border-radius:1px;"></div>
<span style="left:1723px;top:91.8px;height:16px;line-height:16px;color:#6e6e6e;font-size:8.6px;font-style:italic;">搜索色板</span>
<div style="left:1707.7px;top:114.8px;width:12.3px;height:12.2px;background:#ffffff;"></div>
<div style="left:1721.2px;top:114.8px;width:12.3px;height:12.2px;background:#000000;"></div>
<div style="left:1734.7px;top:114.8px;width:12.3px;height:12.2px;background:#ffffff;"></div>
<div style="left:1748.3px;top:114.8px;width:12.3px;height:12.2px;background:#000000;"></div>
<div style="left:1761.8px;top:114.8px;width:12.3px;height:12.2px;background:#000000;"></div>
<div style="left:1775.3px;top:114.8px;width:12.3px;height:12.2px;background:#ffffff;"></div>
<div style="left:1788.8px;top:114.8px;width:12.3px;height:12.2px;background:#f8d9b0;"></div>
<div style="left:1802.3px;top:114.8px;width:12.3px;height:12.2px;background:#ee1c1c;"></div>
<div style="left:1815.9px;top:114.8px;width:12.3px;height:12.2px;background:#f8d9b0;"></div>
<div style="left:1829.4px;top:114.8px;width:12.3px;height:12.2px;background:#b23a2e;"></div>
<div style="left:1842.9px;top:114.8px;width:12.3px;height:12.2px;background:#e8c48c;"></div>
<div style="left:1856.4px;top:114.8px;width:12.3px;height:12.2px;background:#d9ae74;"></div>
<div style="left:1869.9px;top:114.8px;width:12.3px;height:12.2px;background:#ee1c1c;"></div>
<div style="left:1883.5px;top:114.8px;width:12.3px;height:12.2px;background:#d4c0a0;"></div>
<div style="left:1897.0px;top:114.8px;width:12.3px;height:12.2px;background:#1e1e1e;"></div>
<div style="left:1702px;top:133.4px;width:210px;height:1px;background:#454545;"></div>
<div style="left:1703.5px;top:135.3px;width:207px;height:19.3px;background:#4a4a4a;"></div>
<svg style="left:1706.5px;top:142.3px;" width="8" height="5" viewBox="0 0 8 5"><path d="M1 0.800l3 3 3-3" stroke="#b0b0b0" stroke-width="1" fill="none"/></svg>
<svg style="left:1717.5px;top:139.8px;" width="11" height="9.5" viewBox="0 0 11 9.5"><path d="M0.500 9.0V0.500h3.500l1 1.500h5.5v7.0z" fill="none" stroke="#dedede" stroke-width="1"/><rect x="0.500" y="4.275" width="10" height="4.7250000000000005" fill="#dedede"/></svg>
<span style="left:1735.5px;top:137.3px;height:16px;line-height:16px;color:#e0e0e0;font-size:8.6px;">常用</span>
<div style="left:1718.2px;top:156.7px;width:12.3px;height:12.1px;background:#e85c1c;"></div>
<div style="left:1731.7px;top:156.7px;width:12.3px;height:12.1px;background:#a03c08;"></div>
<div style="left:1745.2px;top:156.7px;width:12.3px;height:12.1px;background:#8c1408;"></div>
<div style="left:1758.8px;top:156.7px;width:12.3px;height:12.1px;background:#fcc084;"></div>
<div style="left:1772.3px;top:156.7px;width:12.3px;height:12.1px;background:#14245c;"></div>
<div style="left:1785.8px;top:156.7px;width:12.3px;height:12.1px;background:#fcd0a0;"></div>
<div style="left:1799.3px;top:156.7px;width:12.3px;height:12.1px;background:#fcd484;"></div>
<div style="left:1812.8px;top:156.7px;width:12.3px;height:12.1px;background:#d8dcd4;"></div>
<div style="left:1826.4px;top:156.7px;width:12.3px;height:12.1px;background:#98a898;"></div>
<div style="left:1839.9px;top:156.7px;width:12.3px;height:12.1px;background:#f4f4f0;"></div>
<div style="left:1853.4px;top:156.7px;width:12.3px;height:12.1px;background:#f0c060;"></div>
<div style="left:1866.9px;top:156.7px;width:12.3px;height:12.1px;background:#80d8cc;"></div>
<div style="left:1703.5px;top:171.5px;width:207px;height:19.3px;background:#4a4a4a;"></div>
<svg style="left:1706.5px;top:178.5px;" width="8" height="5" viewBox="0 0 8 5"><path d="M1 0.800l3 3 3-3" stroke="#b0b0b0" stroke-width="1" fill="none"/></svg>
<svg style="left:1717.5px;top:176.0px;" width="11" height="9.5" viewBox="0 0 11 9.5"><path d="M0.500 9.0V0.500h3.500l1 1.500h5.5v7.0z" fill="none" stroke="#dedede" stroke-width="1"/><rect x="0.500" y="4.275" width="10" height="4.7250000000000005" fill="#dedede"/></svg>
<span style="left:1735.5px;top:173.5px;height:16px;line-height:16px;color:#e0e0e0;font-size:8.6px;">国潮龙</span>
<div style="left:1718.2px;top:192.2px;width:12.3px;height:12.1px;background:#8c2010;"></div>
<div style="left:1731.7px;top:192.2px;width:12.3px;height:12.1px;background:#1c2864;"></div>
<div style="left:1745.2px;top:192.2px;width:12.3px;height:12.1px;background:#e8c48c;"></div>
<div style="left:1758.8px;top:192.2px;width:12.3px;height:12.1px;background:#f8dcb0;"></div>
<div style="left:1772.3px;top:192.2px;width:12.3px;height:12.1px;background:#6c140c;"></div>
<div style="left:1785.8px;top:192.2px;width:12.3px;height:12.1px;background:#dc9c6c;"></div>
<div style="left:1799.3px;top:192.2px;width:12.3px;height:12.1px;background:#b83c30;"></div>
<div style="left:1812.8px;top:192.2px;width:12.3px;height:12.1px;background:#e4d090;"></div>
<div style="left:1826.4px;top:192.2px;width:12.3px;height:12.1px;background:#8c5c28;"></div>
<div style="left:1839.9px;top:192.2px;width:12.3px;height:12.1px;background:#981c10;"></div>
<div style="left:1853.4px;top:192.2px;width:12.3px;height:12.1px;background:#143458;"></div>
<div style="left:1866.9px;top:192.2px;width:12.3px;height:12.1px;background:#0c4c50;"></div>
<div style="left:1880.4px;top:192.2px;width:12.3px;height:12.1px;background:#a83028;"></div>
<div style="left:1894.0px;top:192.2px;width:12.3px;height:12.1px;background:#f4dcac;"></div>
<div style="left:1703.5px;top:206.8px;width:207px;height:19.3px;background:#4a4a4a;"></div>
<svg style="left:1706.5px;top:213.8px;" width="8" height="5" viewBox="0 0 8 5"><path d="M1 0.800l3 3 3-3" stroke="#b0b0b0" stroke-width="1" fill="none"/></svg>
<svg style="left:1717.5px;top:211.3px;" width="11" height="9.5" viewBox="0 0 11 9.5"><path d="M0.500 9.0V0.500h3.500l1 1.500h5.5v7.0z" fill="none" stroke="#dedede" stroke-width="1"/><rect x="0.500" y="4.275" width="10" height="4.7250000000000005" fill="#dedede"/></svg>
<span style="left:1735.5px;top:208.8px;height:16px;line-height:16px;color:#e0e0e0;font-size:8.6px;">圣诞</span>
<div style="left:1718.2px;top:227.5px;width:12.3px;height:12.1px;background:#c4141c;"></div>
<div style="left:1731.7px;top:227.5px;width:12.3px;height:12.1px;background:#1c5c50;"></div>
<div style="left:1745.2px;top:227.5px;width:12.3px;height:12.1px;background:#f4ecdc;"></div>
<div style="left:1758.8px;top:227.5px;width:12.3px;height:12.1px;background:#ccc4a0;"></div>
<div style="left:1772.3px;top:227.5px;width:12.3px;height:12.1px;background:#84181c;"></div>
<div style="left:1785.8px;top:227.5px;width:12.3px;height:12.1px;background:#1c4c2c;"></div>
<div style="left:1799.3px;top:227.5px;width:12.3px;height:12.1px;background:#b09468;"></div>
<div style="left:1812.8px;top:227.5px;width:12.3px;height:12.1px;background:#e4d8b4;"></div>
<div style="left:1703.5px;top:241.8px;width:207px;height:19.3px;background:#4a4a4a;"></div>
<svg style="left:1706.5px;top:248.8px;" width="8" height="5" viewBox="0 0 8 5"><path d="M1 0.800l3 3 3-3" stroke="#b0b0b0" stroke-width="1" fill="none"/></svg>
<svg style="left:1717.5px;top:246.3px;" width="11" height="9.5" viewBox="0 0 11 9.5"><path d="M0.500 9.0V0.500h3.500l1 1.500h5.5v7.0z" fill="none" stroke="#dedede" stroke-width="1"/><rect x="0.500" y="4.275" width="10" height="4.7250000000000005" fill="#dedede"/></svg>
<span style="left:1735.5px;top:243.8px;height:16px;line-height:16px;color:#e0e0e0;font-size:8.6px;">RGB</span>
<div style="left:1718.2px;top:262.8px;width:12.3px;height:12.1px;background:#ff0000;"></div>
<div style="left:1731.7px;top:262.8px;width:12.3px;height:12.1px;background:#ffff00;"></div>
<div style="left:1745.2px;top:262.8px;width:12.3px;height:12.1px;background:#00ff00;"></div>
<div style="left:1758.8px;top:262.8px;width:12.3px;height:12.1px;background:#00ffff;"></div>
<div style="left:1772.3px;top:262.8px;width:12.3px;height:12.1px;background:#0000ff;"></div>
<div style="left:1785.8px;top:262.8px;width:12.3px;height:12.1px;background:#ff00ff;"></div>
<div style="left:1911.5px;top:134px;width:8.5px;height:145px;background:#4a4a4a;"></div>
<div style="left:1912px;top:146.5px;width:8px;height:35.5px;background:#6b6b6b;"></div>
<svg style="left:1912.5px;top:139px;" width="7" height="5" viewBox="0 0 7 5"><path d="M1 4l2.500-2.500L6 4" stroke="#6c6c6c" stroke-width="1" fill="none"/></svg>
<svg style="left:1912.5px;top:269px;" width="7" height="5" viewBox="0 0 7 5"><path d="M1 1l2.500 2.500L6 1" stroke="#6c6c6c" stroke-width="1" fill="none"/></svg>
<div style="left:1702px;top:279px;width:218px;height:1px;background:#484848;"></div>
<svg style="left:1848.5px;top:284px;" width="10" height="8" viewBox="0 0 10 8"><path d="M0 8V0h4l1 1.500h5v6.5z" fill="#c8c8c8"/></svg>
<svg style="left:1871px;top:283.5px;" width="9.5" height="9.5" viewBox="0 0 9.5 9.5"><rect x="0.500" y="0.500" width="8.500" height="8.500" fill="none" stroke="#d0d0d0" stroke-width="1"/><path d="M4.750 2.500v4.500M2.500 4.750h4.500" stroke="#d0d0d0" stroke-width="1"/></svg>
<svg style="left:1892px;top:282.5px;" width="10" height="12" viewBox="0 0 10 12"><path d="M0.500 2.500h9M3.500 2.500V1h3v1.500M1.500 2.500v8.500h7V2.500" stroke="#7a7a7a" stroke-width="1" fill="none"/><path d="M3.700 4.500v4.500M6.300 4.500v4.500" stroke="#7a7a7a" stroke-width="0.900"/></svg>
<div style="left:1702px;top:298.5px;width:218px;height:1.5px;background:#3a3a3a;"></div>
<div style="left:1702px;top:300px;width:218px;height:21px;background:#424242;"></div>
<div style="left:1732px;top:300px;width:29.5px;height:21.5px;background:#535353;"></div>
<div style="left:1731.5px;top:300.5px;width:1px;height:20px;background:#3a3a3a;"></div>
<div style="left:1761.5px;top:300.5px;width:1px;height:20px;background:#3a3a3a;"></div>
<div style="left:1783.5px;top:300.5px;width:1px;height:20px;background:#3a3a3a;"></div>
<span style="left:1709px;top:301.0px;height:16px;line-height:16px;color:#a8a8a8;font-size:8.6px;">调整</span>
<span style="left:1738.5px;top:301.0px;height:16px;line-height:16px;color:#f0f0f0;font-size:8.6px;">属性</span>
<span style="left:1767.8px;top:301.0px;height:16px;line-height:16px;color:#a8a8a8;font-size:8.6px;">库</span>
<svg style="left:1911.5px;top:307.5px;" width="8" height="7" viewBox="0 0 8 7"><path d="M0 1h8M0 3.500h8M0 6h8" stroke="#c8c8c8" stroke-width="1.200"/></svg>
<div style="left:1710.8px;top:326px;width:16px;height:16px;background:#3a3a3a;border-radius:1px;"></div>
<svg style="left:1714px;top:328.5px;" width="10" height="11" viewBox="0 0 10 11"><path d="M1 0.600h5l3 3v6.800H1z" fill="none" stroke="#f0f0f0" stroke-width="1.100"/><path d="M6 0.600v3h3" fill="none" stroke="#f0f0f0" stroke-width="0.900"/></svg>
<span style="left:1732px;top:326.8px;height:16px;line-height:16px;color:#c0c0c0;font-size:8.6px;">文档</span>
<div style="left:1702px;top:346.5px;width:210px;height:1px;background:#454545;"></div>
<svg style="left:1706.5px;top:356.0px;" width="8" height="5" viewBox="0 0 8 5"><path d="M1 0.800l3 3 3-3" stroke="#b0b0b0" stroke-width="1" fill="none"/></svg>
<span style="left:1719px;top:350.6px;height:16px;line-height:16px;color:#e6e6e6;font-size:9.2px;font-weight:bold;">画布</span>
<span style="left:1741.5px;top:373.3px;height:16px;line-height:16px;color:#d0d0d0;font-size:8.5px;">W</span>
<span style="left:1742.5px;top:394.5px;height:16px;line-height:16px;color:#d0d0d0;font-size:8.5px;">H</span>
<span style="left:1805.5px;top:373.3px;height:16px;line-height:16px;color:#d0d0d0;font-size:8.5px;">X</span>
<span style="left:1805.5px;top:394.5px;height:16px;line-height:16px;color:#d0d0d0;font-size:8.5px;">Y</span>
<div style="left:1753.500px;top:373.4px;width:42px;height:15.600px;background:#454545;border:1px solid #3a3a3a;border-radius:1px;"></div>
<span style="left:1756px;top:373.4px;height:16px;line-height:16px;color:#e6e6e6;font-size:8.5px;">1884 像素</span>
<div style="left:1817.300px;top:373.4px;width:42px;height:15.600px;background:#4e4e4e;border:1px solid #474747;border-radius:1px;"></div>
<span style="left:1819.5px;top:373.4px;height:16px;line-height:16px;color:#6c6c6c;font-size:8.5px;">0 像素</span>
<div style="left:1753.500px;top:394.6px;width:42px;height:15.600px;background:#454545;border:1px solid #3a3a3a;border-radius:1px;"></div>
<span style="left:1756px;top:394.6px;height:16px;line-height:16px;color:#e6e6e6;font-size:8.5px;">1170 像素</span>
<div style="left:1817.300px;top:394.6px;width:42px;height:15.600px;background:#4e4e4e;border:1px solid #474747;border-radius:1px;"></div>
<span style="left:1819.5px;top:394.6px;height:16px;line-height:16px;color:#6c6c6c;font-size:8.5px;">0 像素</span>
<svg style="left:1716px;top:385px;" width="7" height="13" viewBox="0 0 7 13"><rect x="1.200" y="1" width="4.600" height="6" rx="2.300" fill="none" stroke="#e0e0e0" stroke-width="1"/><rect x="1.200" y="6" width="4.600" height="6" rx="2.300" fill="none" stroke="#e0e0e0" stroke-width="1"/><path d="M3.500 4v5" stroke="#e0e0e0" stroke-width="1"/></svg>
<svg style="left:1756px;top:422px;" width="11.5" height="13" viewBox="0 0 11.5 13"><rect x="0.600" y="0.600" width="10.300" height="11.800" fill="none" stroke="#d8d8d8" stroke-width="1"/><circle cx="5.700" cy="5" r="1.600" fill="#d8d8d8"/><path d="M2.800 11.500c0-5 5.800-5 5.800 0z" fill="#d8d8d8"/></svg>
<div style="left:1772.8px;top:419.6px;width:17.2px;height:17.4px;background:#383838;border-radius:1px;"></div>
<svg style="left:1775.3px;top:423.5px;" width="12.5" height="10" viewBox="0 0 12.5 10"><rect x="0.600" y="0.600" width="11.300" height="8.800" fill="none" stroke="#f0f0f0" stroke-width="1"/><circle cx="6.200" cy="3.800" r="1.500" fill="#f0f0f0"/><path d="M3.300 9c0-4.500 5.800-4.500 5.800 0z" fill="#f0f0f0"/></svg>
<span style="left:1753.5px;top:442.7px;height:16px;line-height:16px;color:#b8b8b8;font-size:8.6px;">分辨率: 72 像素/英寸</span>
<span style="left:1730.4px;top:462.7px;height:16px;line-height:16px;color:#b8b8b8;font-size:8.6px;">模式</span>
<div style="left:1755.9px;top:464px;width:103px;height:13.8px;background:#454545;border:1px solid #414141;border-radius:2px;"></div>
<span style="left:1761.4px;top:463.2px;height:16px;line-height:16px;color:#e0e0e0;font-size:9px;">RGB 颜色</span>
<svg style="left:1849.9px;top:469.4px;" width="6" height="4" viewBox="0 0 6 4"><path d="M0.500 0.500l2.500 2.500 2.500-2.500" stroke="#b0b0b0" stroke-width="1" fill="none"/></svg>
<div style="left:1755.9px;top:484px;width:103px;height:13.8px;background:#454545;border:1px solid #414141;border-radius:2px;"></div>
<span style="left:1761.4px;top:483.2px;height:16px;line-height:16px;color:#e0e0e0;font-size:9px;">8 位/通道</span>
<svg style="left:1849.9px;top:489.4px;" width="6" height="4" viewBox="0 0 6 4"><path d="M0.500 0.500l2.500 2.500 2.500-2.500" stroke="#b0b0b0" stroke-width="1" fill="none"/></svg>
<span style="left:1730.4px;top:504.6px;height:16px;line-height:16px;color:#b8b8b8;font-size:8.6px;">填色</span>
<div style="left:1755px;top:506px;width:13px;height:12.8px;background:#000;"></div>
<div style="left:1772px;top:506px;width:87px;height:13.8px;background:#454545;border:1px solid #414141;border-radius:2px;"></div>
<span style="left:1777.5px;top:505.2px;height:16px;line-height:16px;color:#e0e0e0;font-size:9px;">黑色</span>
<svg style="left:1850px;top:511.4px;" width="6" height="4" viewBox="0 0 6 4"><path d="M0.500 0.500l2.500 2.500 2.500-2.500" stroke="#b0b0b0" stroke-width="1" fill="none"/></svg>
<div style="left:1702px;top:527.4px;width:210px;height:1px;background:#454545;"></div>
<svg style="left:1706.5px;top:537.0px;" width="8" height="5" viewBox="0 0 8 5"><path d="M1 0.800l3 3 3-3" stroke="#b0b0b0" stroke-width="1" fill="none"/></svg>
<span style="left:1719px;top:531.6px;height:16px;line-height:16px;color:#e6e6e6;font-size:9.2px;font-weight:bold;">标尺和网格</span>
<div style="left:1710.8px;top:555.3px;width:17.2px;height:17.4px;background:#383838;border-radius:1px;"></div>
<svg style="left:1713.5px;top:558px;" width="12" height="12" viewBox="0 0 12 12"><path d="M1 11V1h10v3H4v7z" fill="#e8e8e8"/><path d="M5.500 1v1.500M7.500 1v1.500M9.500 1v1.500M1 5.500h1.500M1 7.500h1.500M1 9.500h1.500" stroke="#383838" stroke-width="0.700"/></svg>
<svg style="left:1737.5px;top:558px;" width="12.5" height="12.5" viewBox="0 0 12.5 12.5"><rect x="0.600" y="0.600" width="11.300" height="11.300" fill="none" stroke="#d8d8d8" stroke-width="1"/><path d="M4.400 0.600v11.300M8.100 0.600v11.300M0.600 4.400h11.300M0.600 8.100h11.300" stroke="#d8d8d8" stroke-width="0.900"/></svg>
<svg style="left:1762.5px;top:558px;" width="12.5" height="12.5" viewBox="0 0 12.5 12.5"><rect x="0.600" y="0.600" width="11.300" height="11.300" fill="#666" stroke="#d8d8d8" stroke-width="1"/><path d="M2 2h2v2H2zM6 2h2v2H6zM4 4h2v2H4zM8 4h2v2H8zM2 6h2v2H2zM6 6h2v2H6zM4 8h2v2H4zM8 8h2v2H8z" fill="#8c8c8c"/></svg>
<div style="left:1803px;top:558.4px;width:56px;height:13.4px;background:#454545;border:1px solid #414141;border-radius:2px;"></div>
<span style="left:1808.5px;top:557.4px;height:16px;line-height:16px;color:#e0e0e0;font-size:9px;">像素</span>
<svg style="left:1850px;top:563.6px;" width="6" height="4" viewBox="0 0 6 4"><path d="M0.500 0.500l2.500 2.500 2.500-2.500" stroke="#b0b0b0" stroke-width="1" fill="none"/></svg>
<div style="left:1702px;top:581px;width:210px;height:1px;background:#454545;"></div>
<svg style="left:1706.5px;top:591.5px;" width="8" height="5" viewBox="0 0 8 5"><path d="M1 0.800l3 3 3-3" stroke="#b0b0b0" stroke-width="1" fill="none"/></svg>
<span style="left:1719px;top:586.1px;height:16px;line-height:16px;color:#e6e6e6;font-size:9.2px;font-weight:bold;">参考线</span>
<svg style="left:1713px;top:613.5px;" width="12" height="12" viewBox="0 0 12 12"><path d="M3.500 0.500v11M6 0.500v11M0.500 4.500h11M0.500 7h11" stroke="#7a7a7a" stroke-width="0.900"/></svg>
<svg style="left:1738px;top:613.5px;" width="13" height="13" viewBox="0 0 13 13"><path d="M3.500 0.500v11M6 0.500v11M0.500 4h11M0.500 6.500h6" stroke="#d8d8d8" stroke-width="1"/><rect x="7.500" y="8" width="5" height="4.500" fill="#e8e8e8"/><path d="M8.500 8V7a1.500 1.500 0 0 1 3 0v1" stroke="#e8e8e8" stroke-width="0.900" fill="none"/></svg>
<svg style="left:1763px;top:613.5px;" width="13" height="13" viewBox="0 0 13 13"><path d="M3.500 0.500v11.500M0.500 3.500h11" stroke="#d8d8d8" stroke-width="1"/><path d="M5 3.500l2-2v4z" fill="#d8d8d8"/><path d="M10 5.500l-2.500 3h2l-1 3.500 3-4h-2z" fill="#e8e8e8"/></svg>
<div style="left:1803px;top:612.7px;width:56px;height:13.2px;background:#454545;border:1px solid #414141;border-radius:2px;"></div>
<svg style="left:1850px;top:617.8000000000001px;" width="6" height="4" viewBox="0 0 6 4"><path d="M0.500 0.500l2.500 2.500 2.500-2.500" stroke="#b0b0b0" stroke-width="1" fill="none"/></svg>
<div style="left:1808px;top:618.8px;width:33px;height:1.2px;background:#e0e0e0;"></div>
<div style="left:1702px;top:636.6px;width:210px;height:1px;background:#454545;"></div>
<svg style="left:1706.5px;top:646.1px;" width="8" height="5" viewBox="0 0 8 5"><path d="M1 0.800l3 3 3-3" stroke="#b0b0b0" stroke-width="1" fill="none"/></svg>
<span style="left:1719px;top:640.7px;height:16px;line-height:16px;color:#e6e6e6;font-size:9.2px;font-weight:bold;">快速操作</span>
<div style="left:1710.8px;top:661.600px;width:70.2px;height:15.200px;background:#454545;border:1px solid #414141;border-radius:2px;"></div>
<span style="left:1710.8px;top:661.600px;width:70.2px;height:15.200px;line-height:15px;text-align:center;font-size:8.600px;color:#e0e0e0;">图像大小</span>
<div style="left:1787.5px;top:661.600px;width:70.3px;height:15.200px;background:#454545;border:1px solid #414141;border-radius:2px;"></div>
<span style="left:1787.5px;top:661.600px;width:70.3px;height:15.200px;line-height:15px;text-align:center;font-size:8.600px;color:#e0e0e0;">裁剪</span>
<div style="left:1911.5px;top:347px;width:8.5px;height:350px;background:#4d4d4d;"></div>
<div style="left:1912px;top:361px;width:8px;height:316px;background:#6b6b6b;"></div>
<div style="left:1911.5px;top:677px;width:8.5px;height:20px;background:#494949;"></div>
<svg style="left:1912.5px;top:352px;" width="7" height="5" viewBox="0 0 7 5"><path d="M1 4l2.500-2.500L6 4" stroke="#6c6c6c" stroke-width="1" fill="none"/></svg>
<svg style="left:1912.5px;top:686px;" width="7" height="5" viewBox="0 0 7 5"><path d="M1 1l2.500 2.500L6 1" stroke="#6c6c6c" stroke-width="1" fill="none"/></svg>
<div style="left:1702px;top:715px;width:218px;height:1.5px;background:#3a3a3a;"></div>
<div style="left:1702px;top:716.5px;width:218px;height:21.5px;background:#424242;"></div>
<div style="left:1702px;top:716.5px;width:29.3px;height:22px;background:#535353;"></div>
<div style="left:1731.3px;top:717px;width:1px;height:20.5px;background:#3a3a3a;"></div>
<div style="left:1761.3px;top:717px;width:1px;height:20.5px;background:#3a3a3a;"></div>
<div style="left:1791px;top:717px;width:1px;height:20.5px;background:#3a3a3a;"></div>
<span style="left:1709px;top:719.0px;height:16px;line-height:16px;color:#f0f0f0;font-size:8.6px;">图层</span>
<span style="left:1738.5px;top:719.0px;height:16px;line-height:16px;color:#a8a8a8;font-size:8.6px;">通道</span>
<span style="left:1768px;top:719.0px;height:16px;line-height:16px;color:#a8a8a8;font-size:8.6px;">路径</span>
<svg style="left:1911.5px;top:725px;" width="8" height="7" viewBox="0 0 8 7"><path d="M0 1h8M0 3.500h8M0 6h8" stroke="#c8c8c8" stroke-width="1.200"/></svg>
<div style="left:1705.200px;top:746.100px;width:63px;height:13.800px;background:#3e3e3e;border:1px solid #383838;border-radius:2px;"></div>
<svg style="left:1710.5px;top:749px;" width="8" height="8" viewBox="0 0 8 8"><circle cx="3.200" cy="3.200" r="2.300" stroke="#e6e6e6" stroke-width="1.100" fill="none"/><path d="M5 5l2.300 2.300" stroke="#e6e6e6" stroke-width="1.300" stroke-linecap="round"/></svg>
<span style="left:1721.8px;top:745.2px;height:16px;line-height:16px;color:#e6e6e6;font-size:8.6px;">类型</span>
<svg style="left:1759.5px;top:752px;" width="6" height="4" viewBox="0 0 6 4"><path d="M0.500 0.500l2.500 2.500 2.500-2.500" stroke="#b0b0b0" stroke-width="1" fill="none"/></svg>
<svg style="left:1781px;top:748px;" width="10.5" height="9" viewBox="0 0 10.5 9"><rect x="0.600" y="0.600" width="9.300" height="7.800" rx="0.800" fill="none" stroke="#e0e0e0" stroke-width="1"/><path d="M2 7l2-3 1.500 2 1.500-2.500 1.800 3.500z" fill="#e0e0e0"/></svg>
<svg style="left:1799.2px;top:748.2px;" width="9" height="9" viewBox="0 0 9 9"><circle cx="4.500" cy="4.500" r="3.800" fill="none" stroke="#e0e0e0" stroke-width="1"/><path d="M1.800 7.200A3.800 3.800 0 0 1 7.200 1.800z" fill="#e0e0e0"/></svg>
<span style="left:1816.700px;top:744.500px;width:10px;height:16px;line-height:16px;text-align:center;font-family:'Liberation Serif',serif;font-weight:bold;font-size:12px;color:#e0e0e0;">T</span>
<svg style="left:1835.3px;top:748px;" width="9" height="9" viewBox="0 0 9 9"><rect x="1.500" y="1.500" width="6" height="6" fill="none" stroke="#e0e0e0" stroke-width="1"/><path d="M0 0h3v3H0zM6 0h3v3H6zM0 6h3v3H0zM6 6h3v3H6z" fill="#e0e0e0"/></svg>
<svg style="left:1853.5px;top:747.5px;" width="9" height="10" viewBox="0 0 9 10"><path d="M3 0.600h3l2.400 2.400v6.400H3z" fill="none" stroke="#e0e0e0" stroke-width="1"/><rect x="0.300" y="5" width="4.500" height="4.500" fill="#e0e0e0"/><path d="M1.300 5V4a1.200 1.200 0 0 1 2.400 0v1" stroke="#e0e0e0" stroke-width="0.800" fill="none"/></svg>
<div style="left:1876px;top:749.500px;width:5px;height:9.500px;border-radius:2.500px;background:#3a3a3a;"></div>
<div style="left:1875.200px;top:746.300px;width:6px;height:6px;border-radius:3px;background:#e8e8e8;"></div>
<div style="left:1702px;top:762.7px;width:218px;height:1px;background:#484848;"></div>
<div style="left:1705.200px;top:768.200px;width:86.500px;height:13.200px;background:#4f4f4f;border:1px solid #494949;border-radius:2px;"></div>
<span style="left:1712px;top:767.0px;height:16px;line-height:16px;color:#7e7e7e;font-size:8.6px;">正常</span>
<svg style="left:1783px;top:773.5px;" width="6" height="4" viewBox="0 0 6 4"><path d="M0.500 0.500l2.500 2.500 2.500-2.500" stroke="#5e5e5e" stroke-width="1" fill="none"/></svg>
<span style="left:1798.8px;top:766.7px;height:16px;line-height:16px;color:#858585;font-size:8.6px;">不透明度:</span>
<div style="left:1841.500px;top:768.2px;width:27px;height:12.800px;background:#484848;border:1px solid #454545;"></div>
<span style="left:1843px;top:766.7px;height:16px;line-height:16px;color:#6a6a6a;font-size:8.6px;">100%</span>
<div style="left:1870px;top:768.2px;width:10px;height:12.800px;background:#4f4f4f;border:1px solid #494949;"></div>
<svg style="left:1872.2px;top:773.2px;" width="6" height="4" viewBox="0 0 6 4"><path d="M0.500 0.500l2.500 2.500 2.500-2.500" stroke="#5e5e5e" stroke-width="1" fill="none"/></svg>
<div style="left:1841.500px;top:790px;width:27px;height:12.800px;background:#484848;border:1px solid #454545;"></div>
<span style="left:1843px;top:788.5px;height:16px;line-height:16px;color:#6a6a6a;font-size:8.6px;">100%</span>
<div style="left:1870px;top:790px;width:10px;height:12.800px;background:#4f4f4f;border:1px solid #494949;"></div>
<svg style="left:1872.2px;top:795px;" width="6" height="4" viewBox="0 0 6 4"><path d="M0.500 0.500l2.500 2.500 2.500-2.500" stroke="#5e5e5e" stroke-width="1" fill="none"/></svg>
<div style="left:1702px;top:784px;width:218px;height:1px;background:#484848;"></div>
<span style="left:1707.1px;top:788.2px;height:16px;line-height:16px;color:#858585;font-size:8.6px;">锁定:</span>
<svg style="left:1735px;top:792px;" width="9" height="9" viewBox="0 0 9 9"><rect x="0.500" y="0.500" width="8" height="8" fill="none" stroke="#8c8c8c" stroke-width="1"/><path d="M1 1h2.300v2.300H1zM5.600 1h2.400v2.300H5.600zM3.300 3.300h2.300v2.400H3.300zM1 5.700h2.300V8H1zM5.600 5.700H8V8H5.600z" fill="#8c8c8c"/></svg>
<svg style="left:1752px;top:791px;" width="10" height="11" viewBox="0 0 10 11"><path d="M9 1L4.500 6.500" stroke="#8c8c8c" stroke-width="1.500" stroke-linecap="round"/><path d="M4.300 6.300c-1.600 0-1.800 1.600-3.300 3.200 2 0.500 4.200-0.400 4.500-2z" fill="#8c8c8c"/></svg>
<svg style="left:1767.2px;top:791.2px;" width="10" height="10" viewBox="0 0 10 10"><path d="M5 1v8M1 5h8" stroke="#8c8c8c" stroke-width="1"/><path d="M5 0l1.600 2H3.400zM5 10l1.600-2H3.400zM0 5l2-1.600v3.200zM10 5l-2-1.600v3.200z" fill="#8c8c8c"/></svg>
<svg style="left:1783.5px;top:791px;" width="11" height="10" viewBox="0 0 11 10"><path d="M2.500 0v8.500h8.500M0 2.500h8.500v6" stroke="#8c8c8c" stroke-width="1" fill="none"/><path d="M7 0.500l3 2.500" stroke="#8c8c8c" stroke-width="1"/></svg>
<svg style="left:1801.5px;top:791px;" width="8" height="10" viewBox="0 0 8 10"><rect x="0.300" y="4" width="7.400" height="5.700" fill="#8c8c8c"/><path d="M1.800 4V2.800a2.200 2.200 0 0 1 4.400 0V4" stroke="#8c8c8c" stroke-width="1.100" fill="none"/></svg>
<span style="left:1816.3px;top:788.2px;height:16px;line-height:16px;color:#858585;font-size:8.6px;">填充:</span>
<div style="left:1702px;top:808.5px;width:218px;height:1px;background:#484848;"></div>
<div style="left:1724.4px;top:809px;width:1px;height:220.5px;background:#484848;"></div>
<div style="left:1702px;top:827.0px;width:210px;height:1px;background:#4a4a4a;"></div>
<svg style="left:1708.2px;top:814.75px;" width="11" height="7" viewBox="0 0 11 7"><path d="M0.300 3.500C2.500 0.200 8.500 0.200 10.700 3.500 8.500 6.800 2.500 6.800 0.300 3.500z" fill="#e8e8e8"/><circle cx="5.500" cy="3.500" r="2" fill="#535353"/><circle cx="5.500" cy="3.500" r="0.900" fill="#e8e8e8"/></svg>
<svg style="left:1728px;top:814.25px;" width="5" height="8" viewBox="0 0 5 8"><path d="M1 0.500l2.500 3.500L1 7.500" stroke="#b8b8b8" stroke-width="1" fill="none"/></svg>
<svg style="left:1736.7px;top:813.55px;" width="10.5" height="8.7" viewBox="0 0 10.5 8.7"><path d="M0 8.7V0h4l1 1.500h5.5v7.199999999999999z" fill="#dedede"/></svg>
<span style="left:1757px;top:810.5px;height:16px;line-height:16px;color:#e6e6e6;font-size:8.6px;">组 7</span>
<div style="left:1702px;top:845.5px;width:210px;height:1px;background:#4a4a4a;"></div>
<div style="left:1709.500px;top:832.25px;width:9px;height:9px;border:1px solid #4d4d4d;"></div>
<svg style="left:1728px;top:832.75px;" width="5" height="8" viewBox="0 0 5 8"><path d="M1 0.500l2.500 3.500L1 7.500" stroke="#b8b8b8" stroke-width="1" fill="none"/></svg>
<svg style="left:1736.7px;top:832.05px;" width="10.5" height="8.7" viewBox="0 0 10.5 8.7"><path d="M0 8.7V0h4l1 1.500h5.5v7.199999999999999z" fill="#dedede"/></svg>
<span style="left:1757px;top:829.0px;height:16px;line-height:16px;color:#e6e6e6;font-size:8.6px;">组 6</span>
<div style="left:1702px;top:864.3px;width:210px;height:1px;background:#4a4a4a;"></div>
<div style="left:1709.500px;top:850.9px;width:9px;height:9px;border:1px solid #4d4d4d;"></div>
<svg style="left:1728px;top:851.4px;" width="5" height="8" viewBox="0 0 5 8"><path d="M1 0.500l2.500 3.500L1 7.500" stroke="#b8b8b8" stroke-width="1" fill="none"/></svg>
<svg style="left:1736.7px;top:850.6999999999999px;" width="10.5" height="8.7" viewBox="0 0 10.5 8.7"><path d="M0 8.7V0h4l1 1.500h5.5v7.199999999999999z" fill="#dedede"/></svg>
<span style="left:1757px;top:847.6px;height:16px;line-height:16px;color:#e6e6e6;font-size:8.6px;">组 5</span>
<div style="left:1702px;top:883.0px;width:210px;height:1px;background:#4a4a4a;"></div>
<div style="left:1709.500px;top:869.65px;width:9px;height:9px;border:1px solid #4d4d4d;"></div>
<svg style="left:1728px;top:870.15px;" width="5" height="8" viewBox="0 0 5 8"><path d="M1 0.500l2.500 3.500L1 7.500" stroke="#b8b8b8" stroke-width="1" fill="none"/></svg>
<svg style="left:1736.7px;top:869.4499999999999px;" width="10.5" height="8.7" viewBox="0 0 10.5 8.7"><path d="M0 8.7V0h4l1 1.500h5.5v7.199999999999999z" fill="#dedede"/></svg>
<span style="left:1757px;top:866.4px;height:16px;line-height:16px;color:#e6e6e6;font-size:8.6px;">组 4</span>
<div style="left:1702px;top:901.7px;width:210px;height:1px;background:#4a4a4a;"></div>
<svg style="left:1708.2px;top:889.35px;" width="11" height="7" viewBox="0 0 11 7"><path d="M0.300 3.500C2.500 0.200 8.500 0.200 10.700 3.500 8.500 6.800 2.500 6.800 0.300 3.500z" fill="#e8e8e8"/><circle cx="5.500" cy="3.500" r="2" fill="#535353"/><circle cx="5.500" cy="3.500" r="0.900" fill="#e8e8e8"/></svg>
<svg style="left:1726.5px;top:890.35px;" width="8" height="5" viewBox="0 0 8 5"><path d="M1 0.800l3 3 3-3" stroke="#b0b0b0" stroke-width="1" fill="none"/></svg>
<svg style="left:1736.7px;top:888.15px;" width="10.5" height="8.7" viewBox="0 0 10.5 8.7"><path d="M0.500 8.2V0.500h3.500l1 1.500h5.0v6.199999999999999z" fill="none" stroke="#dedede" stroke-width="1"/><rect x="0.500" y="3.9149999999999996" width="9.5" height="4.285" fill="#dedede"/></svg>
<span style="left:1757px;top:885.1px;height:16px;line-height:16px;color:#e6e6e6;font-size:8.6px;">正面</span>
<div style="left:1702px;top:924.3px;width:210px;height:1px;background:#4a4a4a;"></div>
<svg style="left:1708.2px;top:910.0px;" width="11" height="7" viewBox="0 0 11 7"><path d="M0.300 3.500C2.500 0.200 8.500 0.200 10.700 3.500 8.500 6.800 2.500 6.800 0.300 3.500z" fill="#e8e8e8"/><circle cx="5.500" cy="3.500" r="2" fill="#535353"/><circle cx="5.500" cy="3.500" r="0.900" fill="#e8e8e8"/></svg>
<div style="left:1739.3px;top:906.8px;width:24.2px;height:13.4px;background:#3c3c3c;"></div>
<div style="left:1740px;top:907.5px;width:9.5px;height:12px;background-color:#fff;background-image:linear-gradient(45deg,#dcdcdc 25%,transparent 25%,transparent 75%,#dcdcdc 75%),linear-gradient(45deg,#dcdcdc 25%,transparent 25%,transparent 75%,#dcdcdc 75%);background-size:2px 2px;background-position:0 0,1px 1px;"></div>
<div style="left:1749.5px;top:907.5px;width:13.3px;height:12px;background:#000;"></div>
<span style="left:1771px;top:905.7px;height:16px;line-height:16px;color:#e6e6e6;font-size:8.6px;">图层 3</span>
<div style="left:1702px;top:946.8px;width:210px;height:1px;background:#4a4a4a;"></div>
<svg style="left:1708.2px;top:932.55px;" width="11" height="7" viewBox="0 0 11 7"><path d="M0.300 3.500C2.500 0.200 8.500 0.200 10.700 3.500 8.500 6.800 2.500 6.800 0.300 3.500z" fill="#e8e8e8"/><circle cx="5.500" cy="3.500" r="2" fill="#535353"/><circle cx="5.500" cy="3.500" r="0.900" fill="#e8e8e8"/></svg>
<div style="left:1739.3px;top:929.3499999999999px;width:24.2px;height:13.4px;background:#3c3c3c;"></div>
<div style="left:1740px;top:930.05px;width:22.8px;height:12px;background-color:#fff;background-image:linear-gradient(45deg,#dcdcdc 25%,transparent 25%,transparent 75%,#dcdcdc 75%),linear-gradient(45deg,#dcdcdc 25%,transparent 25%,transparent 75%,#dcdcdc 75%);background-size:2px 2px;background-position:0 0,1px 1px;"></div>
<span style="left:1771px;top:928.2px;height:16px;line-height:16px;color:#e6e6e6;font-size:8.6px;">图层 2</span>
<div style="left:1702px;top:969.3px;width:210px;height:1px;background:#4a4a4a;"></div>
<svg style="left:1708.2px;top:955.05px;" width="11" height="7" viewBox="0 0 11 7"><path d="M0.300 3.500C2.500 0.200 8.500 0.200 10.700 3.500 8.500 6.800 2.500 6.800 0.300 3.500z" fill="#e8e8e8"/><circle cx="5.500" cy="3.500" r="2" fill="#535353"/><circle cx="5.500" cy="3.500" r="0.900" fill="#e8e8e8"/></svg>
<div style="left:1739.3px;top:951.8499999999999px;width:24.2px;height:13.4px;background:#3c3c3c;"></div>
<div style="left:1740px;top:952.55px;width:9.5px;height:12px;background-color:#fff;background-image:linear-gradient(45deg,#dcdcdc 25%,transparent 25%,transparent 75%,#dcdcdc 75%),linear-gradient(45deg,#dcdcdc 25%,transparent 25%,transparent 75%,#dcdcdc 75%);background-size:2px 2px;background-position:0 0,1px 1px;"></div>
<div style="left:1749.5px;top:952.55px;width:13.3px;height:12px;background:#000;"></div>
<span style="left:1771px;top:950.8px;height:16px;line-height:16px;color:#e6e6e6;font-size:8.6px;">图层 1</span>
<div style="left:1702px;top:988.0px;width:210px;height:1px;background:#4a4a4a;"></div>
<div style="left:1709.500px;top:974.65px;width:9px;height:9px;border:1px solid #4d4d4d;"></div>
<svg style="left:1728px;top:975.15px;" width="5" height="8" viewBox="0 0 5 8"><path d="M1 0.500l2.500 3.500L1 7.500" stroke="#b8b8b8" stroke-width="1" fill="none"/></svg>
<svg style="left:1736.7px;top:974.4499999999999px;" width="10.5" height="8.7" viewBox="0 0 10.5 8.7"><path d="M0 8.7V0h4l1 1.500h5.5v7.199999999999999z" fill="#dedede"/></svg>
<span style="left:1757px;top:971.4px;height:16px;line-height:16px;color:#e6e6e6;font-size:8.6px;">组 2</span>
<div style="left:1702px;top:1006.8px;width:210px;height:1px;background:#4a4a4a;"></div>
<div style="left:1709.500px;top:993.4px;width:9px;height:9px;border:1px solid #4d4d4d;"></div>
<svg style="left:1728px;top:993.9px;" width="5" height="8" viewBox="0 0 5 8"><path d="M1 0.500l2.500 3.500L1 7.500" stroke="#b8b8b8" stroke-width="1" fill="none"/></svg>
<svg style="left:1736.7px;top:993.1999999999999px;" width="10.5" height="8.7" viewBox="0 0 10.5 8.7"><path d="M0 8.7V0h4l1 1.500h5.5v7.199999999999999z" fill="#dedede"/></svg>
<span style="left:1757px;top:990.1px;height:16px;line-height:16px;color:#e6e6e6;font-size:8.6px;">组 3</span>
<div style="left:1702px;top:1029.0px;width:210px;height:1px;background:#4a4a4a;"></div>
<svg style="left:1708.2px;top:1014.9px;" width="11" height="7" viewBox="0 0 11 7"><path d="M0.300 3.500C2.500 0.200 8.500 0.200 10.700 3.500 8.500 6.800 2.500 6.800 0.300 3.500z" fill="#e8e8e8"/><circle cx="5.500" cy="3.500" r="2" fill="#535353"/><circle cx="5.500" cy="3.500" r="0.900" fill="#e8e8e8"/></svg>
<div style="left:1727.5px;top:1010.6999999999999px;width:25px;height:15.4px;background:#3c3c3c;"></div>
<div style="left:1728.3px;top:1011.4px;width:23.5px;height:14px;background:#000;"></div>
<span style="left:1759px;top:1010.6px;height:16px;line-height:16px;color:#e6e6e6;font-size:8.6px;">背景</span>
<svg style="left:1890.5px;top:1013.4px;" width="8" height="10" viewBox="0 0 8 10"><rect x="0.600" y="4" width="6.800" height="5.400" fill="none" stroke="#e0e0e0" stroke-width="1"/><path d="M2 4V2.800a2 2 0 0 1 4 0V4" stroke="#e0e0e0" stroke-width="1" fill="none"/><rect x="3.500" y="6" width="1" height="1.500" fill="#e0e0e0"/></svg>
<div style="left:1911.5px;top:809px;width:8.5px;height:220.5px;background:#4a4a4a;"></div>
<div style="left:1912px;top:821px;width:8px;height:192px;background:#6b6b6b;"></div>
<svg style="left:1912.5px;top:814px;" width="7" height="5" viewBox="0 0 7 5"><path d="M1 4l2.500-2.500L6 4" stroke="#6c6c6c" stroke-width="1" fill="none"/></svg>
<svg style="left:1912.5px;top:1019px;" width="7" height="5" viewBox="0 0 7 5"><path d="M1 1l2.500 2.500L6 1" stroke="#6c6c6c" stroke-width="1" fill="none"/></svg>
<svg style="left:1770px;top:1034px;" width="11" height="7" viewBox="0 0 11 7"><rect x="0.600" y="1" width="5.500" height="5" rx="2.500" fill="none" stroke="#8c8c8c" stroke-width="1"/><rect x="4.900" y="1" width="5.500" height="5" rx="2.500" fill="none" stroke="#8c8c8c" stroke-width="1"/></svg>
<span style="left:1791px;top:1029.500px;height:16px;line-height:16px;font-size:11px;font-style:italic;font-family:'Liberation Serif',serif;color:#8c8c8c;">fx</span>
<svg style="left:1810.5px;top:1033.5px;" width="11" height="8.5" viewBox="0 0 11 8.5"><rect x="0" y="0" width="11" height="8.500" fill="#9c9c9c"/><circle cx="5.500" cy="4.250" r="2.500" fill="#535353"/></svg>
<svg style="left:1831.5px;top:1033px;" width="10" height="10" viewBox="0 0 10 10"><circle cx="4.500" cy="4.500" r="3.800" fill="none" stroke="#e0e0e0" stroke-width="1"/><path d="M1.800 7.200A3.800 3.800 0 0 1 7.200 1.800z" fill="#e0e0e0"/><path d="M7 8.500h3l-1.500 1.500z" fill="#e0e0e0"/></svg>
<svg style="left:1851px;top:1033.5px;" width="10" height="8" viewBox="0 0 10 8"><path d="M0 8V0h4l1 1.500h5v6.5z" fill="#d0d0d0"/></svg>
<svg style="left:1872.5px;top:1033px;" width="9" height="9.5" viewBox="0 0 9 9.5"><rect x="0.500" y="0.500" width="8" height="8.500" fill="none" stroke="#e0e0e0" stroke-width="1"/><rect x="3" y="3.200" width="3" height="3" fill="#e0e0e0"/></svg>
<svg style="left:1892px;top:1032px;" width="10" height="12" viewBox="0 0 10 12"><path d="M0.500 2.500h9M3.500 2.500V1h3v1.500M1.500 2.500v8.500h7V2.500" stroke="#8c8c8c" stroke-width="1" fill="none"/><path d="M3.700 4.500v4.500M6.300 4.500v4.500" stroke="#8c8c8c" stroke-width="0.900"/></svg>
</div>
</body></html>
